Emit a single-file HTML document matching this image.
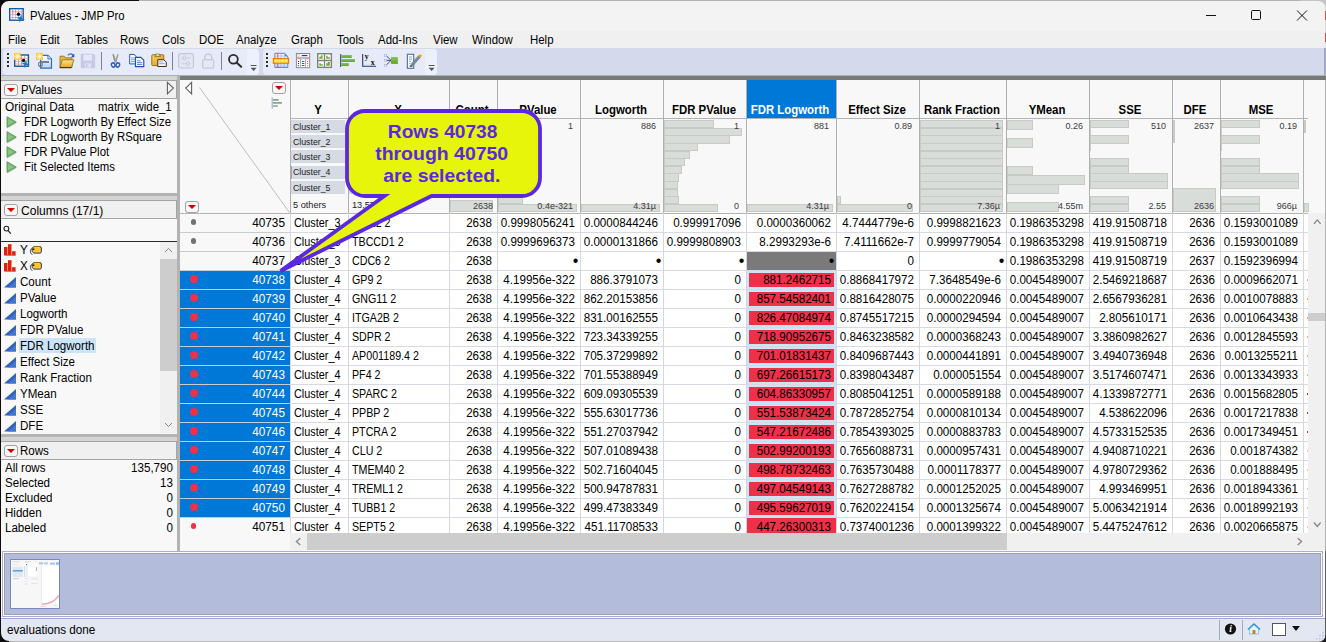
<!DOCTYPE html><html><head><meta charset="utf-8"><title>PValues - JMP Pro</title><style>
*{box-sizing:border-box;margin:0;padding:0}
html,body{width:1326px;height:642px;overflow:hidden;background:#f3f3f3}
body{font-family:"Liberation Sans",sans-serif;font-size:11.6px;color:#000;position:relative}
.a{position:absolute}
.t{position:absolute;white-space:nowrap;line-height:14px}
#title{left:0;top:0;width:1326px;height:31px;background:#f3f3f3}
#menu{left:0;top:31px;width:1326px;height:17px;background:#f0f0f0}
#tb{left:0;top:48px;width:1326px;height:27px;background:#d4d9ec}
.grp{position:absolute;top:49px;height:25.5px;background:#e7ebf7;border-radius:4px}
#bar{left:180px;top:76px;width:1146px;height:3.5px;background:#797979;z-index:3}
#tbline{left:0;top:75px;width:1326px;height:1px;background:#a3acde}
#lgray{left:0;top:76px;width:180px;height:475px;background:#d4d4d4}
.ds{position:absolute;left:0;width:177px;height:3px;background:#b4b4b4}
.ph{position:absolute;left:1px;width:176px;height:19px;background:#f0f0f0;border:1px solid #a4a4a4;border-left:none}
.pb{position:absolute;left:1px;width:176px;background:#f8f8f8}
.rd{position:absolute;width:14px;height:12px;border:1px solid #a0a0a0;border-radius:3px;background:#f8f8f8}
.rd:after{content:"";position:absolute;left:2px;top:3.2px;border-left:4px solid transparent;border-right:4px solid transparent;border-top:4.2px solid #cc0000}
.gt{position:absolute;width:0;height:0;border-top:5px solid transparent;border-bottom:5px solid transparent;border-left:9px solid #4c9a3c}
#tbl{left:180px;top:79px;width:1146px;height:472px;background:#f8f8f8;overflow:hidden}
.vl{position:absolute;width:1px;background:#b0b0b0}
.hl{position:absolute;height:1px;background:#d9d9e6}
.c{position:absolute;height:19px;line-height:19px;white-space:nowrap;font-size:11.6px;padding-top:1px}
.r{text-align:right}
.hn{position:absolute;top:22.5px;height:15px;line-height:15px;font-weight:bold;font-size:12px;text-align:center;white-space:nowrap}
.hb{position:absolute;background:#d9ddd9;border:1px solid #c6cbc6}
.hx{position:absolute;font-size:9.6px;line-height:10px;color:#3a3a3a;text-align:right;white-space:nowrap}
.cb{position:absolute;left:111px;width:54px;height:13px;background:#d5dae3}
.ci{position:absolute;left:113px;font-size:9.6px;letter-spacing:-0.35px;line-height:13px;color:#222;white-space:nowrap}
.col{position:absolute;left:20px;white-space:nowrap;line-height:16px;height:16px}
.ti{position:absolute;left:6px;width:0;height:0;border-left:10px solid transparent;border-bottom:10px solid #2f62b5}
</style></head><body>
<div class="a" id="title">
<svg class="a" style="left:8px;top:7px" width="18" height="18" viewBox="8 7 18 18"><rect x="9.700" y="8.700" width="13.500" height="11.500" fill="#fff" stroke="#1458a8" stroke-width="1.400"/><path d="M12.700 9.400v10.200M15.600 9.400v10.200M18.500 9.400v10.200M21.300 9.400v10.200" stroke="#7a9ad8" stroke-width="0.600"/><path d="M10.400 11.800h12.200M10.400 14.700h12.200M10.400 17.600h12.200" stroke="#f08080" stroke-width="0.700"/><path d="M12.700 9.400v5M15.600 9.400v3" stroke="#f08080" stroke-width="0.700"/><circle cx="18.500" cy="14.300" r="1.700" fill="#0c0c0c"/><path d="M20.600 14.300l1 3.200 3.400 1-3.400 1-1 3.200-1-3.200-3.400-1 3.400-1z" fill="#1878d0" transform="rotate(14 20.600 18.500)"/></svg>
<div class="t" style="top:8.53px;font-size:12.6px;left:30.40px;transform:scaleX(0.898);transform-origin:0 0;">PValues - JMP Pro</div>
<svg class="a" style="left:1190px;top:0" width="136" height="31" viewBox="0 0 136 31"><path d="M16 15.5h10" stroke="#111" stroke-width="1"/><rect x="61.5" y="10.5" width="9" height="9" rx="1.2" fill="none" stroke="#111" stroke-width="1"/><path d="M107 10.5l10 10M117 10.5l-10 10" stroke="#111" stroke-width="1"/></svg>
</div>
<div class="a" id="menu">
<div class="t" style="top:2.14px;font-size:12.3px;left:8.20px;transform:scaleX(0.93);transform-origin:0 0;">File</div>
<div class="t" style="top:2.14px;font-size:12.3px;left:40.20px;transform:scaleX(0.93);transform-origin:0 0;">Edit</div>
<div class="t" style="top:2.14px;font-size:12.3px;left:75.20px;transform:scaleX(0.93);transform-origin:0 0;">Tables</div>
<div class="t" style="top:2.14px;font-size:12.3px;left:120.20px;transform:scaleX(0.93);transform-origin:0 0;">Rows</div>
<div class="t" style="top:2.14px;font-size:12.3px;left:162.20px;transform:scaleX(0.93);transform-origin:0 0;">Cols</div>
<div class="t" style="top:2.14px;font-size:12.3px;left:199.20px;transform:scaleX(0.93);transform-origin:0 0;">DOE</div>
<div class="t" style="top:2.14px;font-size:12.3px;left:236.20px;transform:scaleX(0.93);transform-origin:0 0;">Analyze</div>
<div class="t" style="top:2.14px;font-size:12.3px;left:291.20px;transform:scaleX(0.93);transform-origin:0 0;">Graph</div>
<div class="t" style="top:2.14px;font-size:12.3px;left:337.20px;transform:scaleX(0.93);transform-origin:0 0;">Tools</div>
<div class="t" style="top:2.14px;font-size:12.3px;left:378.20px;transform:scaleX(0.93);transform-origin:0 0;">Add-Ins</div>
<div class="t" style="top:2.14px;font-size:12.3px;left:433.20px;transform:scaleX(0.93);transform-origin:0 0;">View</div>
<div class="t" style="top:2.14px;font-size:12.3px;left:472.20px;transform:scaleX(0.93);transform-origin:0 0;">Window</div>
<div class="t" style="top:2.14px;font-size:12.3px;left:530.20px;transform:scaleX(0.93);transform-origin:0 0;">Help</div>
</div>
<div class="a" id="tb"></div>
<div class="grp" style="left:3px;width:256px"></div><div class="grp" style="left:247px;width:12px;background:#edf1fb;border-radius:0 4px 4px 0"></div>
<div class="grp" style="left:263px;width:173.5px"></div><div class="grp" style="left:425px;width:11.5px;background:#edf1fb;border-radius:0 4px 4px 0"></div>
<svg class="a" style="left:0;top:48px" width="450" height="28" viewBox="0 48 450 28">
<defs><radialGradient id="spk"><stop offset="0" stop-color="#fffbe0"/><stop offset="0.45" stop-color="#fbe070"/><stop offset="1" stop-color="#f3c92c"/></radialGradient><linearGradient id="fold" x1="0" y1="0" x2="0" y2="1"><stop offset="0" stop-color="#fbe38a"/><stop offset="1" stop-color="#e9a61c"/></linearGradient><linearGradient id="pg" x1="0" y1="0" x2="0" y2="1"><stop offset="0" stop-color="#ffffff"/><stop offset="1" stop-color="#b9d4f0"/></linearGradient><linearGradient id="clip" x1="0" y1="0" x2="1" y2="1"><stop offset="0" stop-color="#fbd868"/><stop offset="1" stop-color="#dc9410"/></linearGradient><linearGradient id="grn" x1="0" y1="0" x2="0" y2="1"><stop offset="0" stop-color="#8cc458"/><stop offset="1" stop-color="#62a02c"/></linearGradient></defs>
<rect x="7" y="53" width="2" height="2" fill="#2c2c2c"/>
<rect x="7" y="57" width="2" height="2" fill="#2c2c2c"/>
<rect x="7" y="61" width="2" height="2" fill="#2c2c2c"/>
<rect x="7" y="65" width="2" height="2" fill="#2c2c2c"/>
<rect x="266" y="53" width="2" height="2" fill="#2c2c2c"/>
<rect x="266" y="57" width="2" height="2" fill="#2c2c2c"/>
<rect x="266" y="61" width="2" height="2" fill="#2c2c2c"/>
<rect x="266" y="65" width="2" height="2" fill="#2c2c2c"/>
<rect x="14.7" y="55" width="13.7" height="11.200" fill="#fff" stroke="#14559f" stroke-width="1.400"/><path d="M18.500 55.500v10.500M21.500 55.500v10.500M24.700 55.500v10.500" stroke="#6f8fd0" stroke-width="0.700"/><path d="M15 58.300h13M15 61.300h13M15 64h13" stroke="#ee8a8a" stroke-width="0.700"/><rect x="14" y="52.900" width="6.800" height="7" fill="url(#spk)"/><path d="M17.400 53v6.800M14.100 56.400h6.600M14.800 53.700l5.200 5.400M20 53.700l-5.200 5.400" stroke="#fffdf0" stroke-width="0.600" opacity="0.850"/><circle cx="23.500" cy="60.400" r="1.700" fill="#0c0c0c"/><path d="M25.500 59.900l1 3 3.400 1-3.400 1-1 3.100-1-3.100-3.400-1 3.400-1z" fill="#1878d0" transform="rotate(14 25.500 63.900)"/>
<path d="M40.600 55.400h7.300l3.600 3.500v9.200h-10.900z" fill="url(#pg)" stroke="#2a70c0" stroke-width="1.200"/><path d="M47.900 55.400v3.500h3.600" fill="#dcebfa" stroke="#2a70c0" stroke-width="0.900"/><rect x="36" y="52.900" width="6.900" height="7" fill="url(#spk)"/><path d="M39.450 53v6.800M36.100 56.400h6.700M36.800 53.700l5.300 5.400M42.100 53.700l-5.300 5.400" stroke="#fffdf0" stroke-width="0.600" opacity="0.850"/><path d="M41 62h8" stroke="#6b6b6b" stroke-width="1.700"/><ellipse cx="40.400" cy="64.300" rx="1.900" ry="2.300" fill="none" stroke="#7c7c7c" stroke-width="1.100"/>
<path d="M60 56.200h4.200l1.200 1.600h6.600v9.700h-12z" fill="#e9b842" stroke="#8a6a20" stroke-width="0.800"/><path d="M62.300 59.800h11.600l-2.500 7.800h-11.500z" fill="url(#fold)" stroke="#8a6418" stroke-width="0.800"/><path d="M59.900 67.700h11.500" stroke="#3c2c08" stroke-width="1"/><path d="M67.800 55.300c1.600-2 4.300-1.800 5.500 0.300" fill="none" stroke="#2c6cc4" stroke-width="1.200"/><path d="M74.300 53.600v3.600h-3.300z" fill="#1d57b0"/>
<path d="M81.200 54.200h12.300l1.200 1.200v12.300h-13.500z" fill="#c6cae8" stroke="#bcc0e2" stroke-width="0.600"/><rect x="83.500" y="54.600" width="8.600" height="6" fill="#e6e8f5"/><rect x="84.800" y="63.300" width="6.400" height="4.200" fill="#dfe2f2"/><rect x="85.600" y="64.200" width="2" height="2.600" fill="#c6cae8"/>
<rect x="101" y="52" width="1" height="18" fill="#7d819d"/>
<rect x="172" y="52" width="1" height="18" fill="#7d819d"/>
<rect x="221" y="52" width="1" height="18" fill="#7d819d"/>
<path d="M112.300 54.200l1.500 0 2.600 7.600-1.600 1.200z" fill="#8a8a8a"/><path d="M118.700 54.200l-1.500 0-2.600 7.600 1.600 1.200z" fill="#a0a0a0"/><ellipse cx="113.200" cy="65" rx="1.700" ry="2.100" fill="#fff" stroke="#2a5ccc" stroke-width="1.500" transform="rotate(-20 113.200 65)"/><ellipse cx="117.800" cy="65" rx="1.700" ry="2.100" fill="#fff" stroke="#2a5ccc" stroke-width="1.500" transform="rotate(20 117.800 65)"/>
<path d="M129.700 54.400h4.300l2.400 2.300v7.200h-6.700z" fill="#fff" stroke="#2455b4" stroke-width="1"/><path d="M131 58h4M131 59.800h4M131 61.600h4" stroke="#5a8ad8" stroke-width="0.800"/><path d="M135.500 57.400h5.300l3 2.900v6.300h-8.300z" fill="#fff" stroke="#1f4cae" stroke-width="1.100"/><path d="M137 60.800h3.500M137 62.600h5.300M137 64.400h5.300" stroke="#3f74d2" stroke-width="0.900"/>
<rect x="151.800" y="54.800" width="12" height="10.800" rx="0.800" fill="url(#clip)" stroke="#8a6414" stroke-width="0.900"/><path d="M154.800 56.600l1-2.600h3.700l1 2.600z" fill="#d8c080" stroke="#7a6420" stroke-width="0.700"/><circle cx="157.700" cy="55" r="0.700" fill="#fff8d0"/><path d="M157.800 59.700h5.800l2.700 2.400v4.400h-8.500z" fill="#eef4fc" stroke="#4a3010" stroke-width="1"/><path d="M159.200 61.800h3.600M159.200 63.600h5.600" stroke="#8a9ab8" stroke-width="0.800"/>
<rect x="178.600" y="53.700" width="14.800" height="14.300" rx="1.800" fill="#e3e7f4" stroke="#c3c7db" stroke-width="1.200"/><path d="M181.500 58h9M181.500 63.700h9" stroke="#c9cddf" stroke-width="1"/><ellipse cx="184.300" cy="58" rx="1.300" ry="2.200" fill="#e3e7f4" stroke="#c3c7db" stroke-width="0.900"/><ellipse cx="187.800" cy="63.700" rx="1.300" ry="2.200" fill="#e3e7f4" stroke="#c3c7db" stroke-width="0.900"/>
<path d="M204.700 60V57.600a3.500 3.700 0 0 1 7 0V60" fill="none" stroke="#c6cadb" stroke-width="1.500"/><rect x="202.700" y="59.600" width="11" height="8.500" rx="1" fill="#e5e9f5" stroke="#c6cadb" stroke-width="1.300"/>
<circle cx="233.400" cy="59.300" r="4.400" fill="none" stroke="#2a2a2a" stroke-width="1.800"/><path d="M236.500 62.600l4.700 4.200" stroke="#2a2a2a" stroke-width="2" stroke-linecap="round"/>
<path d="M250.7 65.500h5.800" stroke="#555" stroke-width="1"/><path d="M250.6 67.800h6l-3 3.200z" fill="#555"/>
<path d="M428.7 65.500h5.800" stroke="#555" stroke-width="1"/><path d="M428.6 67.800h6l-3 3.200z" fill="#555"/>
<path d="M274.900 53.300h9.600l3.300 3.200v11h-12.900z" fill="#f4f8ff" stroke="#6a6aaa" stroke-width="0.900"/><path d="M284.500 53.300v3.200h3.300z" fill="#3a8ae0"/><path d="M275.400 56h9M275.400 65h12M275.400 66.700h12M281 53.800v13.500M284.200 56.500v11" stroke="#8ab0e8" stroke-width="0.700"/><path d="M277.800 53.500v14" stroke="#f03838" stroke-width="0.900"/><rect x="273.500" y="58.600" width="15" height="4.600" fill="#f6f060" stroke="#f07800" stroke-width="1.300"/><path d="M277.800 59.300v3.300M281 59.300v3.300M284.200 59.300v3.300" stroke="#e8c848" stroke-width="0.700"/>
<rect x="296.400" y="53.500" width="13.300" height="14.200" fill="#fff" stroke="#8c8c8c" stroke-width="1"/><path d="M300.500 57.500v10M305.500 57.500v10M296.500 57.300h13" stroke="#9a9a9a" stroke-width="0.800"/><rect x="297.300" y="54.400" width="2.400" height="2.200" fill="#f4f4f8" stroke="#c8c8d0" stroke-width="0.500"/><path d="M301.800 55.500h5.600" stroke="#2a3c78" stroke-width="1.200"/><path d="M297 58.700h3M306 58.700h3.200" stroke="#f09098" stroke-width="1.300"/><path d="M301 58.700h4" stroke="#b8bce0" stroke-width="1.300"/><path d="M298.500 61v6" stroke="#24346c" stroke-width="1.100" stroke-dasharray="1 1.100"/><path d="M301.800 61.500h2.600M301.800 63.500h2.600M301.800 65.500h2.600" stroke="#2a4878" stroke-width="0.900"/><path d="M307.600 61v6" stroke="#f04858" stroke-width="1.100" stroke-dasharray="1 1.100"/>
<rect x="317.700" y="53.700" width="13.700" height="13.700" fill="#fff" stroke="#808080" stroke-width="1.400"/><path d="M324.500 53.700v13.700M317.700 60.500h13.700" stroke="#808080" stroke-width="1.300"/><path d="M319.300 58.800v-2h1.500v-1.500h1.800v3.500zM326.200 58.800v-3h1.500v1.500h2.200v1.500zM319.300 65.800v-2.500h1.500v1h2v1.500zM326.200 65.800v-2.500h1.500v-1.200h2.200v3.700z" fill="#6fae38"/>
<rect x="340.200" y="54" width="1" height="13" fill="#1f3a78"/><rect x="341.300" y="55" width="10.500" height="2.900" fill="url(#grn)"/><rect x="341.300" y="59" width="13.600" height="3" fill="url(#grn)"/><rect x="341.300" y="63" width="7.500" height="3" fill="url(#grn)"/>
<path d="M362.700 54v12.200h13.400" fill="none" stroke="#1f3a78" stroke-width="1.100"/><text x="364.800" y="58.700" font-family="Liberation Serif, serif" font-weight="bold" font-size="7.800" fill="#000">y</text><text x="370.800" y="64.900" font-family="Liberation Serif, serif" font-weight="bold" font-size="7.800" fill="#000">x</text>
<path d="M386 55.500l4.800 4.600M386 60.400h5M386 65.300l4.800-4.600" stroke="#22407c" stroke-width="0.900" fill="none"/><rect x="384.300" y="54.500" width="2.200" height="2" fill="#eef0fa" stroke="#a8b0d4" stroke-width="0.600"/><rect x="384.300" y="59.300" width="2.200" height="2" fill="#eef0fa" stroke="#a8b0d4" stroke-width="0.600"/><rect x="384.300" y="64.300" width="2.200" height="2" fill="#eef0fa" stroke="#a8b0d4" stroke-width="0.600"/><rect x="391" y="57" width="6.900" height="6.900" fill="url(#grn)"/>
<rect x="407.400" y="54.300" width="6.300" height="14" fill="#fbfcff" stroke="#5878a4" stroke-width="1.200"/><path d="M409 57h3M409 59.200h3M409 61.400h2M409 63.600h1.500M409 66h3.500" stroke="#7a94b8" stroke-width="0.800"/><path d="M418.700 55.400l1.900 1.700-7.300 8.300-2.900 1.400 1-3.100z" fill="#7c8c9c" stroke="#56677a" stroke-width="0.500"/><path d="M418.200 56l1.200-1.200a1.300 1.300 0 0 1 1.900 1.800l-1.100 1.200z" fill="#f5a21e"/><path d="M410.400 66.800l0.500-1.700 1.300 1.100z" fill="#2a2a2a"/>
</svg>
<div class="a" id="tbline"></div>
<div class="a" id="bar"></div>
<div class="a" id="lgray"></div>
<div class="a" style="left:177px;top:76px;width:3px;height:475px;background:#b2b2b2"></div>
<div class="ds" style="top:193px"></div><div class="ds" style="top:434px"></div>
<div class="ph" style="top:80px"></div>
<div class="rd" style="left:4px;top:84px"></div>
<div class="t" style="top:82.74px;font-size:12.3px;left:20.60px;transform:scaleX(0.918);transform-origin:0 0;">PValues</div>
<svg class="a" style="left:166px;top:81px" width="10" height="14" viewBox="0 0 10 14"><path d="M1.400 1.300l5.900 5.800-5.900 5.800z" fill="#f6f6f6" stroke="#606060" stroke-width="1.100"/></svg>
<div class="pb" style="top:99px;height:94px"></div>
<div class="t" style="top:100.14px;font-size:12.3px;left:5.30px;transform:scaleX(0.964);transform-origin:0 0;">Original Data</div>
<div class="t" style="top:100.14px;font-size:12.3px;left:98.30px;transform:scaleX(0.93);transform-origin:0 0;">matrix_wide_1</div>
<svg class="a" style="left:6px;top:116.2px" width="12" height="13" viewBox="0 0 12 13"><path d="M1.200 11.900l9.200-5.200" stroke="#b8b8b8" stroke-width="0.900"/><path d="M1 0.700l9.200 5.300-9.200 5.300z" fill="#78b872" stroke="#4f9050" stroke-width="0.800" stroke-linejoin="round"/><path d="M2.200 3l5 3-5 3z" fill="#8cc686"/></svg>
<div class="t" style="top:115.44px;font-size:12.3px;left:24.30px;transform:scaleX(0.925);transform-origin:0 0;">FDR Logworth By Effect Size</div>
<svg class="a" style="left:6px;top:131.2px" width="12" height="13" viewBox="0 0 12 13"><path d="M1.200 11.900l9.200-5.200" stroke="#b8b8b8" stroke-width="0.900"/><path d="M1 0.700l9.200 5.300-9.200 5.300z" fill="#78b872" stroke="#4f9050" stroke-width="0.800" stroke-linejoin="round"/><path d="M2.200 3l5 3-5 3z" fill="#8cc686"/></svg>
<div class="t" style="top:130.44px;font-size:12.3px;left:24.30px;transform:scaleX(0.925);transform-origin:0 0;">FDR Logworth By RSquare</div>
<svg class="a" style="left:6px;top:146.2px" width="12" height="13" viewBox="0 0 12 13"><path d="M1.200 11.900l9.200-5.200" stroke="#b8b8b8" stroke-width="0.900"/><path d="M1 0.700l9.200 5.300-9.200 5.300z" fill="#78b872" stroke="#4f9050" stroke-width="0.800" stroke-linejoin="round"/><path d="M2.200 3l5 3-5 3z" fill="#8cc686"/></svg>
<div class="t" style="top:145.44px;font-size:12.3px;left:24.30px;transform:scaleX(0.925);transform-origin:0 0;">FDR PValue Plot</div>
<svg class="a" style="left:6px;top:161.2px" width="12" height="13" viewBox="0 0 12 13"><path d="M1.200 11.900l9.200-5.200" stroke="#b8b8b8" stroke-width="0.900"/><path d="M1 0.700l9.200 5.300-9.200 5.300z" fill="#78b872" stroke="#4f9050" stroke-width="0.800" stroke-linejoin="round"/><path d="M2.200 3l5 3-5 3z" fill="#8cc686"/></svg>
<div class="t" style="top:160.44px;font-size:12.3px;left:24.30px;transform:scaleX(0.925);transform-origin:0 0;">Fit Selected Items</div>
<div class="ph" style="top:200px"></div>
<div class="rd" style="left:4px;top:204px"></div>
<div class="t" style="top:203.54px;font-size:12.3px;left:20.50px;transform:scaleX(0.98);transform-origin:0 0;">Columns (17/1)</div>
<div class="pb" style="top:219px;height:215px"></div>
<div class="a" style="left:1px;top:241px;width:176px;height:1px;background:#2a2a2a"></div>
<svg class="a" style="left:3px;top:225px" width="9" height="10" viewBox="0 0 9 10"><circle cx="3.4" cy="3.6" r="2.4" fill="none" stroke="#222" stroke-width="1.1"/><path d="M5.2 5.6l2.6 3" stroke="#222" stroke-width="1.3"/></svg>
<div class="a" style="left:160px;top:242px;width:17px;height:191px;background:#f0f0f0"></div>
<div class="a" style="left:160px;top:259px;width:17px;height:112px;background:#cdcdcd"></div>
<svg class="a" style="left:160px;top:242px" width="17" height="191" viewBox="0 0 17 191"><path d="M5 10l3.5-3.5L12 10" fill="none" stroke="#888" stroke-width="1"/><path d="M5 181l3.5 3.5L12 181" fill="none" stroke="#888" stroke-width="1"/></svg>
<svg class="a" style="left:3.900px;top:243.5px" width="12" height="12" viewBox="0 0 12 12"><path d="M0.300 11.300h11.500" stroke="#8a2416" stroke-width="0.700"/><rect x="0" y="3" width="3.500" height="8" fill="#dc2408"/><rect x="4" y="0.200" width="3.500" height="10.800" fill="#dc2408"/><rect x="8.100" y="7.200" width="3.500" height="3.800" fill="#dc2408"/></svg>
<div class="t" style="top:242.74px;font-size:12.3px;left:20.30px;transform:scaleX(0.95);transform-origin:0 0;">Y</div>
<svg class="a" style="left:29px;top:244.5px" width="14" height="12" viewBox="0 0 14 12"><path d="M4.300 3.200C1.200 3.500 0 7 3.300 9.800" fill="none" stroke="#1c1c58" stroke-width="0.900"/><path d="M4.800 1.500h6a1.500 1.500 0 0 1 1.500 1.500v3.600a1.500 1.500 0 0 1-1.500 1.500h-6l-1.600-1.700v-3.200z" fill="#fbc82c" stroke="#1c1c58" stroke-width="0.900"/><path d="M3.400 3.100l1.400-1.600h6a1.500 1.500 0 0 1 1.300 0.700" fill="none" stroke="#a86c20" stroke-width="0.900"/><circle cx="4.600" cy="4.200" r="0.900" fill="#1c1c40"/></svg>
<svg class="a" style="left:3.900px;top:259.5px" width="12" height="12" viewBox="0 0 12 12"><path d="M0.300 11.300h11.500" stroke="#8a2416" stroke-width="0.700"/><rect x="0" y="3" width="3.500" height="8" fill="#dc2408"/><rect x="4" y="0.200" width="3.500" height="10.800" fill="#dc2408"/><rect x="8.100" y="7.200" width="3.500" height="3.800" fill="#dc2408"/></svg>
<div class="t" style="top:258.74px;font-size:12.3px;left:20.30px;transform:scaleX(0.95);transform-origin:0 0;">X</div>
<svg class="a" style="left:29px;top:260.5px" width="14" height="12" viewBox="0 0 14 12"><path d="M4.300 3.200C1.200 3.500 0 7 3.300 9.800" fill="none" stroke="#1c1c58" stroke-width="0.900"/><path d="M4.800 1.500h6a1.500 1.500 0 0 1 1.500 1.500v3.600a1.500 1.500 0 0 1-1.500 1.500h-6l-1.600-1.700v-3.200z" fill="#fbc82c" stroke="#1c1c58" stroke-width="0.900"/><path d="M3.400 3.100l1.400-1.600h6a1.500 1.500 0 0 1 1.300 0.700" fill="none" stroke="#a86c20" stroke-width="0.900"/><circle cx="4.600" cy="4.200" r="0.900" fill="#1c1c40"/></svg>
<svg class="a" style="left:4px;top:277.0px" width="12" height="11" viewBox="0 0 12 11"><path d="M0 10.500L12 0V10.500Z" fill="#2f62b8"/><path d="M4 10.500L12 3.500V10.500Z" fill="#4478c8"/></svg>
<div class="t" style="top:274.74px;font-size:12.3px;left:20.30px;transform:scaleX(0.94);transform-origin:0 0;">Count</div>
<svg class="a" style="left:4px;top:293.0px" width="12" height="11" viewBox="0 0 12 11"><path d="M0 10.500L12 0V10.500Z" fill="#2f62b8"/><path d="M4 10.500L12 3.500V10.500Z" fill="#4478c8"/></svg>
<div class="t" style="top:290.74px;font-size:12.3px;left:20.30px;transform:scaleX(0.94);transform-origin:0 0;">PValue</div>
<svg class="a" style="left:4px;top:309.0px" width="12" height="11" viewBox="0 0 12 11"><path d="M0 10.500L12 0V10.500Z" fill="#2f62b8"/><path d="M4 10.500L12 3.500V10.500Z" fill="#4478c8"/></svg>
<div class="t" style="top:306.74px;font-size:12.3px;left:20.30px;transform:scaleX(0.94);transform-origin:0 0;">Logworth</div>
<svg class="a" style="left:4px;top:325.0px" width="12" height="11" viewBox="0 0 12 11"><path d="M0 10.500L12 0V10.500Z" fill="#2f62b8"/><path d="M4 10.500L12 3.500V10.500Z" fill="#4478c8"/></svg>
<div class="t" style="top:322.74px;font-size:12.3px;left:20.30px;transform:scaleX(0.94);transform-origin:0 0;">FDR PValue</div>
<svg class="a" style="left:4px;top:341.0px" width="12" height="11" viewBox="0 0 12 11"><path d="M0 10.500L12 0V10.500Z" fill="#2f62b8"/><path d="M4 10.500L12 3.500V10.500Z" fill="#4478c8"/></svg>
<div class="a" style="left:19px;top:338.2px;width:77px;height:15px;background:#cbe4fa"></div>
<div class="t" style="top:338.74px;font-size:12.3px;left:20.30px;transform:scaleX(0.94);transform-origin:0 0;">FDR Logworth</div>
<svg class="a" style="left:4px;top:357.0px" width="12" height="11" viewBox="0 0 12 11"><path d="M0 10.500L12 0V10.500Z" fill="#2f62b8"/><path d="M4 10.500L12 3.500V10.500Z" fill="#4478c8"/></svg>
<div class="t" style="top:354.74px;font-size:12.3px;left:20.30px;transform:scaleX(0.94);transform-origin:0 0;">Effect Size</div>
<svg class="a" style="left:4px;top:373.0px" width="12" height="11" viewBox="0 0 12 11"><path d="M0 10.500L12 0V10.500Z" fill="#2f62b8"/><path d="M4 10.500L12 3.500V10.500Z" fill="#4478c8"/></svg>
<div class="t" style="top:370.74px;font-size:12.3px;left:20.30px;transform:scaleX(0.94);transform-origin:0 0;">Rank Fraction</div>
<svg class="a" style="left:4px;top:389.0px" width="12" height="11" viewBox="0 0 12 11"><path d="M0 10.500L12 0V10.500Z" fill="#2f62b8"/><path d="M4 10.500L12 3.500V10.500Z" fill="#4478c8"/></svg>
<div class="t" style="top:386.74px;font-size:12.3px;left:20.30px;transform:scaleX(0.94);transform-origin:0 0;">YMean</div>
<svg class="a" style="left:4px;top:405.0px" width="12" height="11" viewBox="0 0 12 11"><path d="M0 10.500L12 0V10.500Z" fill="#2f62b8"/><path d="M4 10.500L12 3.500V10.500Z" fill="#4478c8"/></svg>
<div class="t" style="top:402.74px;font-size:12.3px;left:20.30px;transform:scaleX(0.94);transform-origin:0 0;">SSE</div>
<svg class="a" style="left:4px;top:421.0px" width="12" height="11" viewBox="0 0 12 11"><path d="M0 10.500L12 0V10.500Z" fill="#2f62b8"/><path d="M4 10.500L12 3.500V10.500Z" fill="#4478c8"/></svg>
<div class="t" style="top:418.74px;font-size:12.3px;left:20.30px;transform:scaleX(0.94);transform-origin:0 0;">DFE</div>
<div class="ph" style="top:441px"></div>
<div class="rd" style="left:4px;top:445px"></div>
<div class="t" style="top:444.04px;font-size:12.3px;left:20.40px;transform:scaleX(0.94);transform-origin:0 0;">Rows</div>
<div class="pb" style="top:460px;height:91px"></div>
<div class="t" style="top:460.74px;font-size:12.3px;left:5.30px;transform:scaleX(0.94);transform-origin:0 0;">All rows</div>
<div class="t" style="top:460.74px;font-size:12.3px;left:-127.00px;width:300px;text-align:right;transform:scaleX(0.945);transform-origin:100% 0;">135,790</div>
<div class="t" style="top:475.69px;font-size:12.3px;left:5.30px;transform:scaleX(0.94);transform-origin:0 0;">Selected</div>
<div class="t" style="top:475.69px;font-size:12.3px;left:-127.00px;width:300px;text-align:right;transform:scaleX(0.945);transform-origin:100% 0;">13</div>
<div class="t" style="top:490.64px;font-size:12.3px;left:5.30px;transform:scaleX(0.94);transform-origin:0 0;">Excluded</div>
<div class="t" style="top:490.64px;font-size:12.3px;left:-127.00px;width:300px;text-align:right;transform:scaleX(0.945);transform-origin:100% 0;">0</div>
<div class="t" style="top:505.59px;font-size:12.3px;left:5.30px;transform:scaleX(0.94);transform-origin:0 0;">Hidden</div>
<div class="t" style="top:505.59px;font-size:12.3px;left:-127.00px;width:300px;text-align:right;transform:scaleX(0.945);transform-origin:100% 0;">0</div>
<div class="t" style="top:520.54px;font-size:12.3px;left:5.30px;transform:scaleX(0.94);transform-origin:0 0;">Labeled</div>
<div class="t" style="top:520.54px;font-size:12.3px;left:-127.00px;width:300px;text-align:right;transform:scaleX(0.945);transform-origin:100% 0;">0</div>
<div class="a" id="tbl">
<div class="a" style="left:110px;top:134px;width:1018px;height:320px;background:#fff"></div>
<div class="a" style="left:567px;top:0;width:89px;height:39px;background:#0078d7"></div>
<div class="a" style="left:567px;top:191px;width:89px;height:247px;background:#cce4f7"></div>
<div class="t" style="top:23.70px;font-size:12.4px;left:68.40px;width:140px;text-align:center;transform:scaleX(0.92);transform-origin:50% 0;color:#000;font-weight:bold;">Y</div>
<div class="t" style="top:23.70px;font-size:12.4px;left:147.90px;width:140px;text-align:center;transform:scaleX(0.92);transform-origin:50% 0;color:#000;font-weight:bold;">X</div>
<div class="t" style="top:23.70px;font-size:12.4px;left:222.40px;width:140px;text-align:center;transform:scaleX(0.92);transform-origin:50% 0;color:#000;font-weight:bold;">Count</div>
<div class="t" style="top:23.70px;font-size:12.4px;left:287.90px;width:140px;text-align:center;transform:scaleX(0.92);transform-origin:50% 0;color:#000;font-weight:bold;">PValue</div>
<div class="t" style="top:23.70px;font-size:12.4px;left:370.90px;width:140px;text-align:center;transform:scaleX(0.92);transform-origin:50% 0;color:#000;font-weight:bold;">Logworth</div>
<div class="t" style="top:23.70px;font-size:12.4px;left:453.90px;width:140px;text-align:center;transform:scaleX(0.92);transform-origin:50% 0;color:#000;font-weight:bold;">FDR PValue</div>
<div class="t" style="top:23.70px;font-size:12.4px;left:540.40px;width:140px;text-align:center;transform:scaleX(0.92);transform-origin:50% 0;color:#fff;font-weight:bold;">FDR Logworth</div>
<div class="t" style="top:23.70px;font-size:12.4px;left:626.90px;width:140px;text-align:center;transform:scaleX(0.92);transform-origin:50% 0;color:#000;font-weight:bold;">Effect Size</div>
<div class="t" style="top:23.70px;font-size:12.4px;left:711.90px;width:140px;text-align:center;transform:scaleX(0.92);transform-origin:50% 0;color:#000;font-weight:bold;">Rank Fraction</div>
<div class="t" style="top:23.70px;font-size:12.4px;left:796.90px;width:140px;text-align:center;transform:scaleX(0.92);transform-origin:50% 0;color:#000;font-weight:bold;">YMean</div>
<div class="t" style="top:23.70px;font-size:12.4px;left:879.90px;width:140px;text-align:center;transform:scaleX(0.92);transform-origin:50% 0;color:#000;font-weight:bold;">SSE</div>
<div class="t" style="top:23.70px;font-size:12.4px;left:945.40px;width:140px;text-align:center;transform:scaleX(0.92);transform-origin:50% 0;color:#000;font-weight:bold;">DFE</div>
<div class="t" style="top:23.70px;font-size:12.4px;left:1010.90px;width:140px;text-align:center;transform:scaleX(0.92);transform-origin:50% 0;color:#000;font-weight:bold;">MSE</div>
<div class="hl" style="left:110px;top:39px;width:1018px;background:#b4b4b4"></div>
<div class="hl" style="left:0;top:134px;width:1128px;background:#b4b4b4"></div>
<svg class="a" style="left:0;top:0" width="110" height="135" viewBox="0 0 110 135"><path d="M19.5 8.5L109.5 133.5" stroke="#bdbdbd" stroke-width="1" fill="none"/><path d="M11.600 3.300l-5.900 5.800 5.900 5.800z" fill="#fdfdfd" stroke="#606060" stroke-width="1.100"/><path d="M92.200 18.200v11.500" stroke="#a0acd4" stroke-width="1.100"/><path d="M93 20.900h5.600M93 23.900h8.900M93 27h4.700" stroke="#8ea08e" stroke-width="1.700"/></svg>
<div class="rd" style="left:92px;top:3px"></div>
<div class="rd" style="left:5px;top:122px;width:13.500px;height:11.500px"></div>
<div class="cb" style="top:41.0px"></div>
<div class="t" style="top:40.77px;font-size:9.9px;left:113.30px;transform:scaleX(0.885);transform-origin:0 0;color:#222;">Cluster_1</div>
<div class="cb" style="top:56.2px"></div>
<div class="t" style="top:55.97px;font-size:9.9px;left:113.30px;transform:scaleX(0.885);transform-origin:0 0;color:#222;">Cluster_2</div>
<div class="cb" style="top:71.4px"></div>
<div class="t" style="top:71.17px;font-size:9.9px;left:113.30px;transform:scaleX(0.885);transform-origin:0 0;color:#222;">Cluster_3</div>
<div class="cb" style="top:86.6px"></div>
<div class="t" style="top:86.37px;font-size:9.9px;left:113.30px;transform:scaleX(0.885);transform-origin:0 0;color:#222;">Cluster_4</div>
<div class="cb" style="top:101.8px"></div>
<div class="t" style="top:101.57px;font-size:9.9px;left:113.30px;transform:scaleX(0.885);transform-origin:0 0;color:#222;">Cluster_5</div>
<div class="a" style="left:111px;top:87px;width:1px;height:13px;background:#98a0b4"></div>
<div class="t" style="top:118.57px;font-size:9.9px;left:113.30px;transform:scaleX(0.93);transform-origin:0 0;color:#222;">5 others</div>
<div class="cb" style="left:169px;width:30px;top:41.0px"></div>
<div class="cb" style="left:169px;width:30px;top:56.2px"></div>
<div class="cb" style="left:169px;width:30px;top:71.4px"></div>
<div class="cb" style="left:169px;width:30px;top:86.6px"></div>
<div class="cb" style="left:169px;width:30px;top:101.8px"></div>
<div class="t" style="top:118.57px;font-size:9.9px;left:172.00px;transform:scaleX(0.93);transform-origin:0 0;color:#222;">13,578 others</div>
<div class="hb" style="left:270px;top:120.5px;width:43px;height:12.5px"></div>
<div class="t" style="top:120.31px;font-size:9.5px;left:232.50px;width:80px;text-align:right;transform:scaleX(0.95);transform-origin:100% 0;color:#3a3a3a;">2638</div>
<div class="hb" style="left:318px;top:117.2px;width:25px;height:8.2px"></div>
<div class="hb" style="left:318px;top:124.8px;width:79px;height:8.2px"></div>
<div class="t" style="top:39.91px;font-size:9.5px;left:313.00px;width:80px;text-align:right;transform:scaleX(0.95);transform-origin:100% 0;color:#3a3a3a;">1</div>
<div class="t" style="top:120.31px;font-size:9.5px;left:313.00px;width:80px;text-align:right;transform:scaleX(0.95);transform-origin:100% 0;color:#3a3a3a;">0.4e-321</div>
<div class="hb" style="left:401px;top:124.8px;width:79px;height:8.2px"></div>
<div class="t" style="top:39.91px;font-size:9.5px;left:396.00px;width:80px;text-align:right;transform:scaleX(0.95);transform-origin:100% 0;color:#3a3a3a;">886</div>
<div class="t" style="top:120.31px;font-size:9.5px;left:396.00px;width:80px;text-align:right;transform:scaleX(0.95);transform-origin:100% 0;color:#3a3a3a;">4.31µ</div>
<div class="hb" style="left:484px;top:41.2px;width:50px;height:8.2px"></div>
<div class="hb" style="left:484px;top:48.8px;width:78px;height:8.2px"></div>
<div class="hb" style="left:484px;top:56.4px;width:66px;height:8.2px"></div>
<div class="hb" style="left:484px;top:64.0px;width:34px;height:8.2px"></div>
<div class="hb" style="left:484px;top:71.6px;width:26px;height:8.2px"></div>
<div class="hb" style="left:484px;top:79.2px;width:21px;height:8.2px"></div>
<div class="hb" style="left:484px;top:86.8px;width:18px;height:8.2px"></div>
<div class="hb" style="left:484px;top:94.4px;width:15px;height:8.2px"></div>
<div class="hb" style="left:484px;top:102.0px;width:14px;height:8.2px"></div>
<div class="hb" style="left:484px;top:109.6px;width:14px;height:8.2px"></div>
<div class="hb" style="left:484px;top:117.2px;width:15px;height:8.2px"></div>
<div class="hb" style="left:484px;top:124.8px;width:54px;height:8.2px"></div>
<div class="t" style="top:39.91px;font-size:9.5px;left:479.00px;width:80px;text-align:right;transform:scaleX(0.95);transform-origin:100% 0;color:#3a3a3a;">1</div>
<div class="t" style="top:120.31px;font-size:9.5px;left:479.00px;width:80px;text-align:right;transform:scaleX(0.95);transform-origin:100% 0;color:#3a3a3a;">0</div>
<div class="hb" style="left:567px;top:124.8px;width:86px;height:8.2px"></div>
<div class="t" style="top:39.91px;font-size:9.5px;left:569.00px;width:80px;text-align:right;transform:scaleX(0.95);transform-origin:100% 0;color:#3a3a3a;">881</div>
<div class="t" style="top:120.31px;font-size:9.5px;left:569.00px;width:80px;text-align:right;transform:scaleX(0.95);transform-origin:100% 0;color:#3a3a3a;">4.31µ</div>
<div class="hb" style="left:657px;top:117.2px;width:4px;height:8.2px"></div>
<div class="hb" style="left:657px;top:124.8px;width:76px;height:8.2px"></div>
<div class="t" style="top:39.91px;font-size:9.5px;left:652.00px;width:80px;text-align:right;transform:scaleX(0.95);transform-origin:100% 0;color:#3a3a3a;">0.89</div>
<div class="t" style="top:120.31px;font-size:9.5px;left:652.00px;width:80px;text-align:right;transform:scaleX(0.95);transform-origin:100% 0;color:#3a3a3a;">0</div>
<div class="hb" style="left:740px;top:41.2px;width:83px;height:8.2px"></div>
<div class="hb" style="left:740px;top:48.8px;width:83px;height:8.2px"></div>
<div class="hb" style="left:740px;top:56.4px;width:83px;height:8.2px"></div>
<div class="hb" style="left:740px;top:64.0px;width:83px;height:8.2px"></div>
<div class="hb" style="left:740px;top:71.6px;width:83px;height:8.2px"></div>
<div class="hb" style="left:740px;top:79.2px;width:83px;height:8.2px"></div>
<div class="hb" style="left:740px;top:86.8px;width:83px;height:8.2px"></div>
<div class="hb" style="left:740px;top:94.4px;width:83px;height:8.2px"></div>
<div class="hb" style="left:740px;top:102.0px;width:83px;height:8.2px"></div>
<div class="hb" style="left:740px;top:109.6px;width:83px;height:8.2px"></div>
<div class="hb" style="left:740px;top:117.2px;width:83px;height:8.2px"></div>
<div class="hb" style="left:740px;top:124.8px;width:83px;height:8.2px"></div>
<div class="t" style="top:39.91px;font-size:9.5px;left:740.00px;width:80px;text-align:right;transform:scaleX(0.95);transform-origin:100% 0;color:#3a3a3a;">1</div>
<div class="t" style="top:120.31px;font-size:9.5px;left:740.00px;width:80px;text-align:right;transform:scaleX(0.95);transform-origin:100% 0;color:#3a3a3a;">7.36µ</div>
<div class="hb" style="left:827px;top:41.2px;width:26px;height:9.7px"></div>
<div class="hb" style="left:827px;top:59.4px;width:26px;height:9.7px"></div>
<div class="hb" style="left:827px;top:86.8px;width:26px;height:9.7px"></div>
<div class="hb" style="left:827px;top:95.9px;width:78px;height:9.7px"></div>
<div class="hb" style="left:827px;top:105.0px;width:52px;height:9.7px"></div>
<div class="hb" style="left:827px;top:123.3px;width:52px;height:9.7px"></div>
<div class="t" style="top:39.91px;font-size:9.5px;left:823.00px;width:80px;text-align:right;transform:scaleX(0.95);transform-origin:100% 0;color:#3a3a3a;">0.26</div>
<div class="t" style="top:120.31px;font-size:9.5px;left:823.00px;width:80px;text-align:right;transform:scaleX(0.95);transform-origin:100% 0;color:#3a3a3a;">4.55m</div>
<div class="hb" style="left:910px;top:41.2px;width:39px;height:8.2px"></div>
<div class="a" style="left:910px;top:48.8px;width:1px;height:8.2px;background:#c9cec9"></div>
<div class="hb" style="left:910px;top:56.4px;width:39px;height:8.2px"></div>
<div class="a" style="left:910px;top:64.0px;width:1px;height:8.2px;background:#c9cec9"></div>
<div class="hb" style="left:910px;top:79.2px;width:39px;height:8.2px"></div>
<div class="hb" style="left:910px;top:86.8px;width:39px;height:8.2px"></div>
<div class="hb" style="left:910px;top:94.4px;width:78px;height:8.2px"></div>
<div class="hb" style="left:910px;top:102.0px;width:78px;height:8.2px"></div>
<div class="hb" style="left:910px;top:117.2px;width:39px;height:8.2px"></div>
<div class="hb" style="left:910px;top:124.8px;width:39px;height:8.2px"></div>
<div class="t" style="top:39.91px;font-size:9.5px;left:906.00px;width:80px;text-align:right;transform:scaleX(0.95);transform-origin:100% 0;color:#3a3a3a;">510</div>
<div class="t" style="top:120.31px;font-size:9.5px;left:906.00px;width:80px;text-align:right;transform:scaleX(0.95);transform-origin:100% 0;color:#3a3a3a;">2.55</div>
<div class="hb" style="left:993px;top:109.4px;width:43px;height:23.4px"></div>
<div class="hb" style="left:993px;top:41px;width:1px;height:23px"></div>
<div class="t" style="top:39.91px;font-size:9.5px;left:954.00px;width:80px;text-align:right;transform:scaleX(0.95);transform-origin:100% 0;color:#3a3a3a;">2637</div>
<div class="t" style="top:120.31px;font-size:9.5px;left:954.00px;width:80px;text-align:right;transform:scaleX(0.95);transform-origin:100% 0;color:#3a3a3a;">2636</div>
<div class="hb" style="left:1041px;top:41.2px;width:39px;height:8.2px"></div>
<div class="a" style="left:1041px;top:48.8px;width:1px;height:8.2px;background:#c9cec9"></div>
<div class="hb" style="left:1041px;top:56.4px;width:39px;height:8.2px"></div>
<div class="a" style="left:1041px;top:64.0px;width:1px;height:8.2px;background:#c9cec9"></div>
<div class="hb" style="left:1041px;top:79.2px;width:39px;height:8.2px"></div>
<div class="hb" style="left:1041px;top:86.8px;width:39px;height:8.2px"></div>
<div class="hb" style="left:1041px;top:94.4px;width:78px;height:8.2px"></div>
<div class="hb" style="left:1041px;top:102.0px;width:78px;height:8.2px"></div>
<div class="hb" style="left:1041px;top:117.2px;width:39px;height:8.2px"></div>
<div class="hb" style="left:1041px;top:124.8px;width:39px;height:8.2px"></div>
<div class="t" style="top:39.91px;font-size:9.5px;left:1037.00px;width:80px;text-align:right;transform:scaleX(0.95);transform-origin:100% 0;color:#3a3a3a;">0.19</div>
<div class="t" style="top:120.31px;font-size:9.5px;left:1037.00px;width:80px;text-align:right;transform:scaleX(0.95);transform-origin:100% 0;color:#3a3a3a;">966µ</div>
<div class="hb" style="left:1124px;top:123.5px;width:5px;height:9px"></div>
<div class="hb" style="left:1124px;top:41px;width:1px;height:13px"></div>
<div class="a" style="left:10.7px;top:140.1px;width:5.6px;height:5.6px;border-radius:50%;background:#727272"></div>
<div class="t" style="top:136.81px;font-size:12.1px;left:15.40px;width:90px;text-align:right;transform:scaleX(0.977);transform-origin:100% 0;">40735</div>
<div class="t" style="top:136.74px;font-size:12.3px;left:114.30px;transform:scaleX(0.885);transform-origin:0 0;">Cluster_3</div>
<div class="t" style="top:136.74px;font-size:12.3px;left:172.30px;transform:scaleX(0.868);transform-origin:0 0;">NME2 2</div>
<div class="t" style="top:136.88px;font-size:11.9px;left:191.50px;width:120px;text-align:right;transform:scaleX(0.977);transform-origin:100% 0;">2638</div>
<div class="t" style="top:136.88px;font-size:11.9px;left:274.50px;width:120px;text-align:right;transform:scaleX(0.977);transform-origin:100% 0;">0.9998056241</div>
<div class="t" style="top:136.88px;font-size:11.9px;left:357.50px;width:120px;text-align:right;transform:scaleX(0.977);transform-origin:100% 0;">0.0000844246</div>
<div class="t" style="top:136.88px;font-size:11.9px;left:440.50px;width:120px;text-align:right;transform:scaleX(0.977);transform-origin:100% 0;">0.999917096</div>
<div class="t" style="top:136.88px;font-size:11.9px;left:530.50px;width:120px;text-align:right;transform:scaleX(0.977);transform-origin:100% 0;">0.0000360062</div>
<div class="t" style="top:136.88px;font-size:11.9px;left:613.50px;width:120px;text-align:right;transform:scaleX(0.977);transform-origin:100% 0;">4.7444779e-6</div>
<div class="t" style="top:136.88px;font-size:11.9px;left:700.50px;width:120px;text-align:right;transform:scaleX(0.977);transform-origin:100% 0;">0.9998821623</div>
<div class="t" style="top:136.88px;font-size:11.9px;left:783.50px;width:120px;text-align:right;transform:scaleX(0.977);transform-origin:100% 0;">0.1986353298</div>
<div class="t" style="top:136.88px;font-size:11.9px;left:866.50px;width:120px;text-align:right;transform:scaleX(0.977);transform-origin:100% 0;">419.91508718</div>
<div class="t" style="top:136.88px;font-size:11.9px;left:914.50px;width:120px;text-align:right;transform:scaleX(0.977);transform-origin:100% 0;">2636</div>
<div class="t" style="top:136.88px;font-size:11.9px;left:997.50px;width:120px;text-align:right;transform:scaleX(0.977);transform-origin:100% 0;">0.1593001089</div>
<div class="a" style="left:10.7px;top:159.1px;width:5.6px;height:5.6px;border-radius:50%;background:#727272"></div>
<div class="t" style="top:155.81px;font-size:12.1px;left:15.40px;width:90px;text-align:right;transform:scaleX(0.977);transform-origin:100% 0;">40736</div>
<div class="t" style="top:155.74px;font-size:12.3px;left:114.30px;transform:scaleX(0.885);transform-origin:0 0;">Cluster_3</div>
<div class="t" style="top:155.74px;font-size:12.3px;left:172.30px;transform:scaleX(0.868);transform-origin:0 0;">TBCCD1 2</div>
<div class="t" style="top:155.88px;font-size:11.9px;left:191.50px;width:120px;text-align:right;transform:scaleX(0.977);transform-origin:100% 0;">2638</div>
<div class="t" style="top:155.88px;font-size:11.9px;left:274.50px;width:120px;text-align:right;transform:scaleX(0.977);transform-origin:100% 0;">0.9999696373</div>
<div class="t" style="top:155.88px;font-size:11.9px;left:357.50px;width:120px;text-align:right;transform:scaleX(0.977);transform-origin:100% 0;">0.0000131866</div>
<div class="t" style="top:155.88px;font-size:11.9px;left:440.50px;width:120px;text-align:right;transform:scaleX(0.977);transform-origin:100% 0;">0.9999808903</div>
<div class="t" style="top:155.88px;font-size:11.9px;left:530.50px;width:120px;text-align:right;transform:scaleX(0.977);transform-origin:100% 0;">8.2993293e-6</div>
<div class="t" style="top:155.88px;font-size:11.9px;left:613.50px;width:120px;text-align:right;transform:scaleX(0.977);transform-origin:100% 0;">7.4111662e-7</div>
<div class="t" style="top:155.88px;font-size:11.9px;left:700.50px;width:120px;text-align:right;transform:scaleX(0.977);transform-origin:100% 0;">0.9999779054</div>
<div class="t" style="top:155.88px;font-size:11.9px;left:783.50px;width:120px;text-align:right;transform:scaleX(0.977);transform-origin:100% 0;">0.1986353298</div>
<div class="t" style="top:155.88px;font-size:11.9px;left:866.50px;width:120px;text-align:right;transform:scaleX(0.977);transform-origin:100% 0;">419.91508719</div>
<div class="t" style="top:155.88px;font-size:11.9px;left:914.50px;width:120px;text-align:right;transform:scaleX(0.977);transform-origin:100% 0;">2636</div>
<div class="t" style="top:155.88px;font-size:11.9px;left:997.50px;width:120px;text-align:right;transform:scaleX(0.977);transform-origin:100% 0;">0.1593001089</div>
<div class="t" style="top:174.81px;font-size:12.1px;left:15.40px;width:90px;text-align:right;transform:scaleX(0.977);transform-origin:100% 0;">40737</div>
<div class="t" style="top:174.74px;font-size:12.3px;left:114.30px;transform:scaleX(0.885);transform-origin:0 0;">Cluster_3</div>
<div class="t" style="top:174.74px;font-size:12.3px;left:172.30px;transform:scaleX(0.868);transform-origin:0 0;">CDC6 2</div>
<div class="t" style="top:174.88px;font-size:11.9px;left:191.50px;width:120px;text-align:right;transform:scaleX(0.977);transform-origin:100% 0;">2638</div>
<div class="t" style="top:174.76px;font-size:16px;left:278.40px;width:120px;text-align:right;transform:scaleX(1);transform-origin:100% 0;">•</div>
<div class="t" style="top:174.76px;font-size:16px;left:361.40px;width:120px;text-align:right;transform:scaleX(1);transform-origin:100% 0;">•</div>
<div class="t" style="top:174.76px;font-size:16px;left:444.40px;width:120px;text-align:right;transform:scaleX(1);transform-origin:100% 0;">•</div>
<div class="a" style="left:567px;top:173px;width:89px;height:18px;background:#7a7a7a"></div>
<div class="t" style="top:174.76px;font-size:16px;left:534.40px;width:120px;text-align:right;transform:scaleX(1);transform-origin:100% 0;">•</div>
<div class="t" style="top:174.88px;font-size:11.9px;left:613.50px;width:120px;text-align:right;transform:scaleX(0.977);transform-origin:100% 0;">0</div>
<div class="t" style="top:174.76px;font-size:16px;left:704.40px;width:120px;text-align:right;transform:scaleX(1);transform-origin:100% 0;">•</div>
<div class="t" style="top:174.88px;font-size:11.9px;left:783.50px;width:120px;text-align:right;transform:scaleX(0.977);transform-origin:100% 0;">0.1986353298</div>
<div class="t" style="top:174.88px;font-size:11.9px;left:866.50px;width:120px;text-align:right;transform:scaleX(0.977);transform-origin:100% 0;">419.91508719</div>
<div class="t" style="top:174.88px;font-size:11.9px;left:914.50px;width:120px;text-align:right;transform:scaleX(0.977);transform-origin:100% 0;">2637</div>
<div class="t" style="top:174.88px;font-size:11.9px;left:997.50px;width:120px;text-align:right;transform:scaleX(0.977);transform-origin:100% 0;">0.1592396994</div>
<div class="a" style="left:0;top:192px;width:110px;height:18px;background:#0078d7"></div>
<div class="a" style="left:9.5px;top:195.9px;width:8px;height:8px;border-radius:50%;background:#ee3048"></div>
<div class="t" style="top:193.81px;font-size:12.1px;left:15.40px;width:90px;text-align:right;transform:scaleX(0.977);transform-origin:100% 0;color:#fff;">40738</div>
<div class="t" style="top:193.74px;font-size:12.3px;left:114.30px;transform:scaleX(0.885);transform-origin:0 0;">Cluster_4</div>
<div class="t" style="top:193.74px;font-size:12.3px;left:172.30px;transform:scaleX(0.868);transform-origin:0 0;">GP9 2</div>
<div class="t" style="top:193.88px;font-size:11.9px;left:191.50px;width:120px;text-align:right;transform:scaleX(0.977);transform-origin:100% 0;">2638</div>
<div class="t" style="top:193.88px;font-size:11.9px;left:274.50px;width:120px;text-align:right;transform:scaleX(0.977);transform-origin:100% 0;">4.19956e-322</div>
<div class="t" style="top:193.88px;font-size:11.9px;left:357.50px;width:120px;text-align:right;transform:scaleX(0.977);transform-origin:100% 0;">886.3791073</div>
<div class="t" style="top:193.88px;font-size:11.9px;left:440.50px;width:120px;text-align:right;transform:scaleX(0.977);transform-origin:100% 0;">0</div>
<div class="a" style="left:569px;top:194px;width:85px;height:14px;background:#ee3048"></div>
<div class="t" style="top:193.88px;font-size:11.9px;left:530.50px;width:120px;text-align:right;transform:scaleX(0.977);transform-origin:100% 0;">881.2462715</div>
<div class="t" style="top:193.88px;font-size:11.9px;left:613.50px;width:120px;text-align:right;transform:scaleX(0.977);transform-origin:100% 0;">0.8868417972</div>
<div class="t" style="top:193.88px;font-size:11.9px;left:700.50px;width:120px;text-align:right;transform:scaleX(0.977);transform-origin:100% 0;">7.3648549e-6</div>
<div class="t" style="top:193.88px;font-size:11.9px;left:783.50px;width:120px;text-align:right;transform:scaleX(0.977);transform-origin:100% 0;">0.0045489007</div>
<div class="t" style="top:193.88px;font-size:11.9px;left:866.50px;width:120px;text-align:right;transform:scaleX(0.977);transform-origin:100% 0;">2.5469218687</div>
<div class="t" style="top:193.88px;font-size:11.9px;left:914.50px;width:120px;text-align:right;transform:scaleX(0.977);transform-origin:100% 0;">2636</div>
<div class="t" style="top:193.88px;font-size:11.9px;left:997.50px;width:120px;text-align:right;transform:scaleX(0.977);transform-origin:100% 0;">0.0009662071</div>
<div class="a" style="left:0;top:211px;width:110px;height:18px;background:#0078d7"></div>
<div class="a" style="left:9.5px;top:214.9px;width:8px;height:8px;border-radius:50%;background:#ee3048"></div>
<div class="t" style="top:212.81px;font-size:12.1px;left:15.40px;width:90px;text-align:right;transform:scaleX(0.977);transform-origin:100% 0;color:#fff;">40739</div>
<div class="t" style="top:212.74px;font-size:12.3px;left:114.30px;transform:scaleX(0.885);transform-origin:0 0;">Cluster_4</div>
<div class="t" style="top:212.74px;font-size:12.3px;left:172.30px;transform:scaleX(0.868);transform-origin:0 0;">GNG11 2</div>
<div class="t" style="top:212.88px;font-size:11.9px;left:191.50px;width:120px;text-align:right;transform:scaleX(0.977);transform-origin:100% 0;">2638</div>
<div class="t" style="top:212.88px;font-size:11.9px;left:274.50px;width:120px;text-align:right;transform:scaleX(0.977);transform-origin:100% 0;">4.19956e-322</div>
<div class="t" style="top:212.88px;font-size:11.9px;left:357.50px;width:120px;text-align:right;transform:scaleX(0.977);transform-origin:100% 0;">862.20153856</div>
<div class="t" style="top:212.88px;font-size:11.9px;left:440.50px;width:120px;text-align:right;transform:scaleX(0.977);transform-origin:100% 0;">0</div>
<div class="a" style="left:569px;top:213px;width:85px;height:14px;background:#ee3048"></div>
<div class="t" style="top:212.88px;font-size:11.9px;left:530.50px;width:120px;text-align:right;transform:scaleX(0.977);transform-origin:100% 0;">857.54582401</div>
<div class="t" style="top:212.88px;font-size:11.9px;left:613.50px;width:120px;text-align:right;transform:scaleX(0.977);transform-origin:100% 0;">0.8816428075</div>
<div class="t" style="top:212.88px;font-size:11.9px;left:700.50px;width:120px;text-align:right;transform:scaleX(0.977);transform-origin:100% 0;">0.0000220946</div>
<div class="t" style="top:212.88px;font-size:11.9px;left:783.50px;width:120px;text-align:right;transform:scaleX(0.977);transform-origin:100% 0;">0.0045489007</div>
<div class="t" style="top:212.88px;font-size:11.9px;left:866.50px;width:120px;text-align:right;transform:scaleX(0.977);transform-origin:100% 0;">2.6567936281</div>
<div class="t" style="top:212.88px;font-size:11.9px;left:914.50px;width:120px;text-align:right;transform:scaleX(0.977);transform-origin:100% 0;">2636</div>
<div class="t" style="top:212.88px;font-size:11.9px;left:997.50px;width:120px;text-align:right;transform:scaleX(0.977);transform-origin:100% 0;">0.0010078883</div>
<div class="a" style="left:0;top:230px;width:110px;height:18px;background:#0078d7"></div>
<div class="a" style="left:9.5px;top:233.9px;width:8px;height:8px;border-radius:50%;background:#ee3048"></div>
<div class="t" style="top:231.81px;font-size:12.1px;left:15.40px;width:90px;text-align:right;transform:scaleX(0.977);transform-origin:100% 0;color:#fff;">40740</div>
<div class="t" style="top:231.74px;font-size:12.3px;left:114.30px;transform:scaleX(0.885);transform-origin:0 0;">Cluster_4</div>
<div class="t" style="top:231.74px;font-size:12.3px;left:172.30px;transform:scaleX(0.868);transform-origin:0 0;">ITGA2B 2</div>
<div class="t" style="top:231.88px;font-size:11.9px;left:191.50px;width:120px;text-align:right;transform:scaleX(0.977);transform-origin:100% 0;">2638</div>
<div class="t" style="top:231.88px;font-size:11.9px;left:274.50px;width:120px;text-align:right;transform:scaleX(0.977);transform-origin:100% 0;">4.19956e-322</div>
<div class="t" style="top:231.88px;font-size:11.9px;left:357.50px;width:120px;text-align:right;transform:scaleX(0.977);transform-origin:100% 0;">831.00162555</div>
<div class="t" style="top:231.88px;font-size:11.9px;left:440.50px;width:120px;text-align:right;transform:scaleX(0.977);transform-origin:100% 0;">0</div>
<div class="a" style="left:569px;top:232px;width:85px;height:14px;background:#ee3048"></div>
<div class="t" style="top:231.88px;font-size:11.9px;left:530.50px;width:120px;text-align:right;transform:scaleX(0.977);transform-origin:100% 0;">826.47084974</div>
<div class="t" style="top:231.88px;font-size:11.9px;left:613.50px;width:120px;text-align:right;transform:scaleX(0.977);transform-origin:100% 0;">0.8745517215</div>
<div class="t" style="top:231.88px;font-size:11.9px;left:700.50px;width:120px;text-align:right;transform:scaleX(0.977);transform-origin:100% 0;">0.0000294594</div>
<div class="t" style="top:231.88px;font-size:11.9px;left:783.50px;width:120px;text-align:right;transform:scaleX(0.977);transform-origin:100% 0;">0.0045489007</div>
<div class="t" style="top:231.88px;font-size:11.9px;left:866.50px;width:120px;text-align:right;transform:scaleX(0.977);transform-origin:100% 0;">2.805610171</div>
<div class="t" style="top:231.88px;font-size:11.9px;left:914.50px;width:120px;text-align:right;transform:scaleX(0.977);transform-origin:100% 0;">2636</div>
<div class="t" style="top:231.88px;font-size:11.9px;left:997.50px;width:120px;text-align:right;transform:scaleX(0.977);transform-origin:100% 0;">0.0010643438</div>
<div class="a" style="left:0;top:249px;width:110px;height:18px;background:#0078d7"></div>
<div class="a" style="left:9.5px;top:252.9px;width:8px;height:8px;border-radius:50%;background:#ee3048"></div>
<div class="t" style="top:250.81px;font-size:12.1px;left:15.40px;width:90px;text-align:right;transform:scaleX(0.977);transform-origin:100% 0;color:#fff;">40741</div>
<div class="t" style="top:250.74px;font-size:12.3px;left:114.30px;transform:scaleX(0.885);transform-origin:0 0;">Cluster_4</div>
<div class="t" style="top:250.74px;font-size:12.3px;left:172.30px;transform:scaleX(0.868);transform-origin:0 0;">SDPR 2</div>
<div class="t" style="top:250.88px;font-size:11.9px;left:191.50px;width:120px;text-align:right;transform:scaleX(0.977);transform-origin:100% 0;">2638</div>
<div class="t" style="top:250.88px;font-size:11.9px;left:274.50px;width:120px;text-align:right;transform:scaleX(0.977);transform-origin:100% 0;">4.19956e-322</div>
<div class="t" style="top:250.88px;font-size:11.9px;left:357.50px;width:120px;text-align:right;transform:scaleX(0.977);transform-origin:100% 0;">723.34339255</div>
<div class="t" style="top:250.88px;font-size:11.9px;left:440.50px;width:120px;text-align:right;transform:scaleX(0.977);transform-origin:100% 0;">0</div>
<div class="a" style="left:569px;top:251px;width:85px;height:14px;background:#ee3048"></div>
<div class="t" style="top:250.88px;font-size:11.9px;left:530.50px;width:120px;text-align:right;transform:scaleX(0.977);transform-origin:100% 0;">718.90952675</div>
<div class="t" style="top:250.88px;font-size:11.9px;left:613.50px;width:120px;text-align:right;transform:scaleX(0.977);transform-origin:100% 0;">0.8463238582</div>
<div class="t" style="top:250.88px;font-size:11.9px;left:700.50px;width:120px;text-align:right;transform:scaleX(0.977);transform-origin:100% 0;">0.0000368243</div>
<div class="t" style="top:250.88px;font-size:11.9px;left:783.50px;width:120px;text-align:right;transform:scaleX(0.977);transform-origin:100% 0;">0.0045489007</div>
<div class="t" style="top:250.88px;font-size:11.9px;left:866.50px;width:120px;text-align:right;transform:scaleX(0.977);transform-origin:100% 0;">3.3860982627</div>
<div class="t" style="top:250.88px;font-size:11.9px;left:914.50px;width:120px;text-align:right;transform:scaleX(0.977);transform-origin:100% 0;">2636</div>
<div class="t" style="top:250.88px;font-size:11.9px;left:997.50px;width:120px;text-align:right;transform:scaleX(0.977);transform-origin:100% 0;">0.0012845593</div>
<div class="a" style="left:0;top:268px;width:110px;height:18px;background:#0078d7"></div>
<div class="a" style="left:9.5px;top:271.9px;width:8px;height:8px;border-radius:50%;background:#ee3048"></div>
<div class="t" style="top:269.81px;font-size:12.1px;left:15.40px;width:90px;text-align:right;transform:scaleX(0.977);transform-origin:100% 0;color:#fff;">40742</div>
<div class="t" style="top:269.74px;font-size:12.3px;left:114.30px;transform:scaleX(0.885);transform-origin:0 0;">Cluster_4</div>
<div class="t" style="top:269.74px;font-size:12.3px;left:172.30px;transform:scaleX(0.868);transform-origin:0 0;">AP001189.4 2</div>
<div class="t" style="top:269.88px;font-size:11.9px;left:191.50px;width:120px;text-align:right;transform:scaleX(0.977);transform-origin:100% 0;">2638</div>
<div class="t" style="top:269.88px;font-size:11.9px;left:274.50px;width:120px;text-align:right;transform:scaleX(0.977);transform-origin:100% 0;">4.19956e-322</div>
<div class="t" style="top:269.88px;font-size:11.9px;left:357.50px;width:120px;text-align:right;transform:scaleX(0.977);transform-origin:100% 0;">705.37299892</div>
<div class="t" style="top:269.88px;font-size:11.9px;left:440.50px;width:120px;text-align:right;transform:scaleX(0.977);transform-origin:100% 0;">0</div>
<div class="a" style="left:569px;top:270px;width:85px;height:14px;background:#ee3048"></div>
<div class="t" style="top:269.88px;font-size:11.9px;left:530.50px;width:120px;text-align:right;transform:scaleX(0.977);transform-origin:100% 0;">701.01831437</div>
<div class="t" style="top:269.88px;font-size:11.9px;left:613.50px;width:120px;text-align:right;transform:scaleX(0.977);transform-origin:100% 0;">0.8409687443</div>
<div class="t" style="top:269.88px;font-size:11.9px;left:700.50px;width:120px;text-align:right;transform:scaleX(0.977);transform-origin:100% 0;">0.0000441891</div>
<div class="t" style="top:269.88px;font-size:11.9px;left:783.50px;width:120px;text-align:right;transform:scaleX(0.977);transform-origin:100% 0;">0.0045489007</div>
<div class="t" style="top:269.88px;font-size:11.9px;left:866.50px;width:120px;text-align:right;transform:scaleX(0.977);transform-origin:100% 0;">3.4940736948</div>
<div class="t" style="top:269.88px;font-size:11.9px;left:914.50px;width:120px;text-align:right;transform:scaleX(0.977);transform-origin:100% 0;">2636</div>
<div class="t" style="top:269.88px;font-size:11.9px;left:997.50px;width:120px;text-align:right;transform:scaleX(0.977);transform-origin:100% 0;">0.0013255211</div>
<div class="a" style="left:0;top:287px;width:110px;height:18px;background:#0078d7"></div>
<div class="a" style="left:9.5px;top:290.9px;width:8px;height:8px;border-radius:50%;background:#ee3048"></div>
<div class="t" style="top:288.81px;font-size:12.1px;left:15.40px;width:90px;text-align:right;transform:scaleX(0.977);transform-origin:100% 0;color:#fff;">40743</div>
<div class="t" style="top:288.74px;font-size:12.3px;left:114.30px;transform:scaleX(0.885);transform-origin:0 0;">Cluster_4</div>
<div class="t" style="top:288.74px;font-size:12.3px;left:172.30px;transform:scaleX(0.868);transform-origin:0 0;">PF4 2</div>
<div class="t" style="top:288.88px;font-size:11.9px;left:191.50px;width:120px;text-align:right;transform:scaleX(0.977);transform-origin:100% 0;">2638</div>
<div class="t" style="top:288.88px;font-size:11.9px;left:274.50px;width:120px;text-align:right;transform:scaleX(0.977);transform-origin:100% 0;">4.19956e-322</div>
<div class="t" style="top:288.88px;font-size:11.9px;left:357.50px;width:120px;text-align:right;transform:scaleX(0.977);transform-origin:100% 0;">701.55388949</div>
<div class="t" style="top:288.88px;font-size:11.9px;left:440.50px;width:120px;text-align:right;transform:scaleX(0.977);transform-origin:100% 0;">0</div>
<div class="a" style="left:569px;top:289px;width:85px;height:14px;background:#ee3048"></div>
<div class="t" style="top:288.88px;font-size:11.9px;left:530.50px;width:120px;text-align:right;transform:scaleX(0.977);transform-origin:100% 0;">697.26615173</div>
<div class="t" style="top:288.88px;font-size:11.9px;left:613.50px;width:120px;text-align:right;transform:scaleX(0.977);transform-origin:100% 0;">0.8398043487</div>
<div class="t" style="top:288.88px;font-size:11.9px;left:700.50px;width:120px;text-align:right;transform:scaleX(0.977);transform-origin:100% 0;">0.000051554</div>
<div class="t" style="top:288.88px;font-size:11.9px;left:783.50px;width:120px;text-align:right;transform:scaleX(0.977);transform-origin:100% 0;">0.0045489007</div>
<div class="t" style="top:288.88px;font-size:11.9px;left:866.50px;width:120px;text-align:right;transform:scaleX(0.977);transform-origin:100% 0;">3.5174607471</div>
<div class="t" style="top:288.88px;font-size:11.9px;left:914.50px;width:120px;text-align:right;transform:scaleX(0.977);transform-origin:100% 0;">2636</div>
<div class="t" style="top:288.88px;font-size:11.9px;left:997.50px;width:120px;text-align:right;transform:scaleX(0.977);transform-origin:100% 0;">0.0013343933</div>
<div class="a" style="left:0;top:306px;width:110px;height:18px;background:#0078d7"></div>
<div class="a" style="left:9.5px;top:309.9px;width:8px;height:8px;border-radius:50%;background:#ee3048"></div>
<div class="t" style="top:307.81px;font-size:12.1px;left:15.40px;width:90px;text-align:right;transform:scaleX(0.977);transform-origin:100% 0;color:#fff;">40744</div>
<div class="t" style="top:307.74px;font-size:12.3px;left:114.30px;transform:scaleX(0.885);transform-origin:0 0;">Cluster_4</div>
<div class="t" style="top:307.74px;font-size:12.3px;left:172.30px;transform:scaleX(0.868);transform-origin:0 0;">SPARC 2</div>
<div class="t" style="top:307.88px;font-size:11.9px;left:191.50px;width:120px;text-align:right;transform:scaleX(0.977);transform-origin:100% 0;">2638</div>
<div class="t" style="top:307.88px;font-size:11.9px;left:274.50px;width:120px;text-align:right;transform:scaleX(0.977);transform-origin:100% 0;">4.19956e-322</div>
<div class="t" style="top:307.88px;font-size:11.9px;left:357.50px;width:120px;text-align:right;transform:scaleX(0.977);transform-origin:100% 0;">609.09305539</div>
<div class="t" style="top:307.88px;font-size:11.9px;left:440.50px;width:120px;text-align:right;transform:scaleX(0.977);transform-origin:100% 0;">0</div>
<div class="a" style="left:569px;top:308px;width:85px;height:14px;background:#ee3048"></div>
<div class="t" style="top:307.88px;font-size:11.9px;left:530.50px;width:120px;text-align:right;transform:scaleX(0.977);transform-origin:100% 0;">604.86330957</div>
<div class="t" style="top:307.88px;font-size:11.9px;left:613.50px;width:120px;text-align:right;transform:scaleX(0.977);transform-origin:100% 0;">0.8085041251</div>
<div class="t" style="top:307.88px;font-size:11.9px;left:700.50px;width:120px;text-align:right;transform:scaleX(0.977);transform-origin:100% 0;">0.0000589188</div>
<div class="t" style="top:307.88px;font-size:11.9px;left:783.50px;width:120px;text-align:right;transform:scaleX(0.977);transform-origin:100% 0;">0.0045489007</div>
<div class="t" style="top:307.88px;font-size:11.9px;left:866.50px;width:120px;text-align:right;transform:scaleX(0.977);transform-origin:100% 0;">4.1339872771</div>
<div class="t" style="top:307.88px;font-size:11.9px;left:914.50px;width:120px;text-align:right;transform:scaleX(0.977);transform-origin:100% 0;">2636</div>
<div class="t" style="top:307.88px;font-size:11.9px;left:997.50px;width:120px;text-align:right;transform:scaleX(0.977);transform-origin:100% 0;">0.0015682805</div>
<div class="a" style="left:0;top:325px;width:110px;height:18px;background:#0078d7"></div>
<div class="a" style="left:9.5px;top:328.9px;width:8px;height:8px;border-radius:50%;background:#ee3048"></div>
<div class="t" style="top:326.81px;font-size:12.1px;left:15.40px;width:90px;text-align:right;transform:scaleX(0.977);transform-origin:100% 0;color:#fff;">40745</div>
<div class="t" style="top:326.74px;font-size:12.3px;left:114.30px;transform:scaleX(0.885);transform-origin:0 0;">Cluster_4</div>
<div class="t" style="top:326.74px;font-size:12.3px;left:172.30px;transform:scaleX(0.868);transform-origin:0 0;">PPBP 2</div>
<div class="t" style="top:326.88px;font-size:11.9px;left:191.50px;width:120px;text-align:right;transform:scaleX(0.977);transform-origin:100% 0;">2638</div>
<div class="t" style="top:326.88px;font-size:11.9px;left:274.50px;width:120px;text-align:right;transform:scaleX(0.977);transform-origin:100% 0;">4.19956e-322</div>
<div class="t" style="top:326.88px;font-size:11.9px;left:357.50px;width:120px;text-align:right;transform:scaleX(0.977);transform-origin:100% 0;">555.63017736</div>
<div class="t" style="top:326.88px;font-size:11.9px;left:440.50px;width:120px;text-align:right;transform:scaleX(0.977);transform-origin:100% 0;">0</div>
<div class="a" style="left:569px;top:327px;width:85px;height:14px;background:#ee3048"></div>
<div class="t" style="top:326.88px;font-size:11.9px;left:530.50px;width:120px;text-align:right;transform:scaleX(0.977);transform-origin:100% 0;">551.53873424</div>
<div class="t" style="top:326.88px;font-size:11.9px;left:613.50px;width:120px;text-align:right;transform:scaleX(0.977);transform-origin:100% 0;">0.7872852754</div>
<div class="t" style="top:326.88px;font-size:11.9px;left:700.50px;width:120px;text-align:right;transform:scaleX(0.977);transform-origin:100% 0;">0.0000810134</div>
<div class="t" style="top:326.88px;font-size:11.9px;left:783.50px;width:120px;text-align:right;transform:scaleX(0.977);transform-origin:100% 0;">0.0045489007</div>
<div class="t" style="top:326.88px;font-size:11.9px;left:866.50px;width:120px;text-align:right;transform:scaleX(0.977);transform-origin:100% 0;">4.538622096</div>
<div class="t" style="top:326.88px;font-size:11.9px;left:914.50px;width:120px;text-align:right;transform:scaleX(0.977);transform-origin:100% 0;">2636</div>
<div class="t" style="top:326.88px;font-size:11.9px;left:997.50px;width:120px;text-align:right;transform:scaleX(0.977);transform-origin:100% 0;">0.0017217838</div>
<div class="a" style="left:0;top:344px;width:110px;height:18px;background:#0078d7"></div>
<div class="a" style="left:9.5px;top:347.9px;width:8px;height:8px;border-radius:50%;background:#ee3048"></div>
<div class="t" style="top:345.81px;font-size:12.1px;left:15.40px;width:90px;text-align:right;transform:scaleX(0.977);transform-origin:100% 0;color:#fff;">40746</div>
<div class="t" style="top:345.74px;font-size:12.3px;left:114.30px;transform:scaleX(0.885);transform-origin:0 0;">Cluster_4</div>
<div class="t" style="top:345.74px;font-size:12.3px;left:172.30px;transform:scaleX(0.868);transform-origin:0 0;">PTCRA 2</div>
<div class="t" style="top:345.88px;font-size:11.9px;left:191.50px;width:120px;text-align:right;transform:scaleX(0.977);transform-origin:100% 0;">2638</div>
<div class="t" style="top:345.88px;font-size:11.9px;left:274.50px;width:120px;text-align:right;transform:scaleX(0.977);transform-origin:100% 0;">4.19956e-322</div>
<div class="t" style="top:345.88px;font-size:11.9px;left:357.50px;width:120px;text-align:right;transform:scaleX(0.977);transform-origin:100% 0;">551.27037942</div>
<div class="t" style="top:345.88px;font-size:11.9px;left:440.50px;width:120px;text-align:right;transform:scaleX(0.977);transform-origin:100% 0;">0</div>
<div class="a" style="left:569px;top:346px;width:85px;height:14px;background:#ee3048"></div>
<div class="t" style="top:345.88px;font-size:11.9px;left:530.50px;width:120px;text-align:right;transform:scaleX(0.977);transform-origin:100% 0;">547.21672486</div>
<div class="t" style="top:345.88px;font-size:11.9px;left:613.50px;width:120px;text-align:right;transform:scaleX(0.977);transform-origin:100% 0;">0.7854393025</div>
<div class="t" style="top:345.88px;font-size:11.9px;left:700.50px;width:120px;text-align:right;transform:scaleX(0.977);transform-origin:100% 0;">0.0000883783</div>
<div class="t" style="top:345.88px;font-size:11.9px;left:783.50px;width:120px;text-align:right;transform:scaleX(0.977);transform-origin:100% 0;">0.0045489007</div>
<div class="t" style="top:345.88px;font-size:11.9px;left:866.50px;width:120px;text-align:right;transform:scaleX(0.977);transform-origin:100% 0;">4.5733152535</div>
<div class="t" style="top:345.88px;font-size:11.9px;left:914.50px;width:120px;text-align:right;transform:scaleX(0.977);transform-origin:100% 0;">2636</div>
<div class="t" style="top:345.88px;font-size:11.9px;left:997.50px;width:120px;text-align:right;transform:scaleX(0.977);transform-origin:100% 0;">0.0017349451</div>
<div class="a" style="left:0;top:363px;width:110px;height:18px;background:#0078d7"></div>
<div class="a" style="left:9.5px;top:366.9px;width:8px;height:8px;border-radius:50%;background:#ee3048"></div>
<div class="t" style="top:364.81px;font-size:12.1px;left:15.40px;width:90px;text-align:right;transform:scaleX(0.977);transform-origin:100% 0;color:#fff;">40747</div>
<div class="t" style="top:364.74px;font-size:12.3px;left:114.30px;transform:scaleX(0.885);transform-origin:0 0;">Cluster_4</div>
<div class="t" style="top:364.74px;font-size:12.3px;left:172.30px;transform:scaleX(0.868);transform-origin:0 0;">CLU 2</div>
<div class="t" style="top:364.88px;font-size:11.9px;left:191.50px;width:120px;text-align:right;transform:scaleX(0.977);transform-origin:100% 0;">2638</div>
<div class="t" style="top:364.88px;font-size:11.9px;left:274.50px;width:120px;text-align:right;transform:scaleX(0.977);transform-origin:100% 0;">4.19956e-322</div>
<div class="t" style="top:364.88px;font-size:11.9px;left:357.50px;width:120px;text-align:right;transform:scaleX(0.977);transform-origin:100% 0;">507.01089438</div>
<div class="t" style="top:364.88px;font-size:11.9px;left:440.50px;width:120px;text-align:right;transform:scaleX(0.977);transform-origin:100% 0;">0</div>
<div class="a" style="left:569px;top:365px;width:85px;height:14px;background:#ee3048"></div>
<div class="t" style="top:364.88px;font-size:11.9px;left:530.50px;width:120px;text-align:right;transform:scaleX(0.977);transform-origin:100% 0;">502.99200193</div>
<div class="t" style="top:364.88px;font-size:11.9px;left:613.50px;width:120px;text-align:right;transform:scaleX(0.977);transform-origin:100% 0;">0.7656088731</div>
<div class="t" style="top:364.88px;font-size:11.9px;left:700.50px;width:120px;text-align:right;transform:scaleX(0.977);transform-origin:100% 0;">0.0000957431</div>
<div class="t" style="top:364.88px;font-size:11.9px;left:783.50px;width:120px;text-align:right;transform:scaleX(0.977);transform-origin:100% 0;">0.0045489007</div>
<div class="t" style="top:364.88px;font-size:11.9px;left:866.50px;width:120px;text-align:right;transform:scaleX(0.977);transform-origin:100% 0;">4.9408710221</div>
<div class="t" style="top:364.88px;font-size:11.9px;left:914.50px;width:120px;text-align:right;transform:scaleX(0.977);transform-origin:100% 0;">2636</div>
<div class="t" style="top:364.88px;font-size:11.9px;left:997.50px;width:120px;text-align:right;transform:scaleX(0.977);transform-origin:100% 0;">0.001874382</div>
<div class="a" style="left:0;top:382px;width:110px;height:18px;background:#0078d7"></div>
<div class="a" style="left:9.5px;top:385.9px;width:8px;height:8px;border-radius:50%;background:#ee3048"></div>
<div class="t" style="top:383.81px;font-size:12.1px;left:15.40px;width:90px;text-align:right;transform:scaleX(0.977);transform-origin:100% 0;color:#fff;">40748</div>
<div class="t" style="top:383.74px;font-size:12.3px;left:114.30px;transform:scaleX(0.885);transform-origin:0 0;">Cluster_4</div>
<div class="t" style="top:383.74px;font-size:12.3px;left:172.30px;transform:scaleX(0.868);transform-origin:0 0;">TMEM40 2</div>
<div class="t" style="top:383.88px;font-size:11.9px;left:191.50px;width:120px;text-align:right;transform:scaleX(0.977);transform-origin:100% 0;">2638</div>
<div class="t" style="top:383.88px;font-size:11.9px;left:274.50px;width:120px;text-align:right;transform:scaleX(0.977);transform-origin:100% 0;">4.19956e-322</div>
<div class="t" style="top:383.88px;font-size:11.9px;left:357.50px;width:120px;text-align:right;transform:scaleX(0.977);transform-origin:100% 0;">502.71604045</div>
<div class="t" style="top:383.88px;font-size:11.9px;left:440.50px;width:120px;text-align:right;transform:scaleX(0.977);transform-origin:100% 0;">0</div>
<div class="a" style="left:569px;top:384px;width:85px;height:14px;background:#ee3048"></div>
<div class="t" style="top:383.88px;font-size:11.9px;left:530.50px;width:120px;text-align:right;transform:scaleX(0.977);transform-origin:100% 0;">498.78732463</div>
<div class="t" style="top:383.88px;font-size:11.9px;left:613.50px;width:120px;text-align:right;transform:scaleX(0.977);transform-origin:100% 0;">0.7635730488</div>
<div class="t" style="top:383.88px;font-size:11.9px;left:700.50px;width:120px;text-align:right;transform:scaleX(0.977);transform-origin:100% 0;">0.0001178377</div>
<div class="t" style="top:383.88px;font-size:11.9px;left:783.50px;width:120px;text-align:right;transform:scaleX(0.977);transform-origin:100% 0;">0.0045489007</div>
<div class="t" style="top:383.88px;font-size:11.9px;left:866.50px;width:120px;text-align:right;transform:scaleX(0.977);transform-origin:100% 0;">4.9780729362</div>
<div class="t" style="top:383.88px;font-size:11.9px;left:914.50px;width:120px;text-align:right;transform:scaleX(0.977);transform-origin:100% 0;">2636</div>
<div class="t" style="top:383.88px;font-size:11.9px;left:997.50px;width:120px;text-align:right;transform:scaleX(0.977);transform-origin:100% 0;">0.001888495</div>
<div class="a" style="left:0;top:401px;width:110px;height:18px;background:#0078d7"></div>
<div class="a" style="left:9.5px;top:404.9px;width:8px;height:8px;border-radius:50%;background:#ee3048"></div>
<div class="t" style="top:402.81px;font-size:12.1px;left:15.40px;width:90px;text-align:right;transform:scaleX(0.977);transform-origin:100% 0;color:#fff;">40749</div>
<div class="t" style="top:402.74px;font-size:12.3px;left:114.30px;transform:scaleX(0.885);transform-origin:0 0;">Cluster_4</div>
<div class="t" style="top:402.74px;font-size:12.3px;left:172.30px;transform:scaleX(0.868);transform-origin:0 0;">TREML1 2</div>
<div class="t" style="top:402.88px;font-size:11.9px;left:191.50px;width:120px;text-align:right;transform:scaleX(0.977);transform-origin:100% 0;">2638</div>
<div class="t" style="top:402.88px;font-size:11.9px;left:274.50px;width:120px;text-align:right;transform:scaleX(0.977);transform-origin:100% 0;">4.19956e-322</div>
<div class="t" style="top:402.88px;font-size:11.9px;left:357.50px;width:120px;text-align:right;transform:scaleX(0.977);transform-origin:100% 0;">500.94787831</div>
<div class="t" style="top:402.88px;font-size:11.9px;left:440.50px;width:120px;text-align:right;transform:scaleX(0.977);transform-origin:100% 0;">0</div>
<div class="a" style="left:569px;top:403px;width:85px;height:14px;background:#ee3048"></div>
<div class="t" style="top:402.88px;font-size:11.9px;left:530.50px;width:120px;text-align:right;transform:scaleX(0.977);transform-origin:100% 0;">497.04549143</div>
<div class="t" style="top:402.88px;font-size:11.9px;left:613.50px;width:120px;text-align:right;transform:scaleX(0.977);transform-origin:100% 0;">0.7627288782</div>
<div class="t" style="top:402.88px;font-size:11.9px;left:700.50px;width:120px;text-align:right;transform:scaleX(0.977);transform-origin:100% 0;">0.0001252025</div>
<div class="t" style="top:402.88px;font-size:11.9px;left:783.50px;width:120px;text-align:right;transform:scaleX(0.977);transform-origin:100% 0;">0.0045489007</div>
<div class="t" style="top:402.88px;font-size:11.9px;left:866.50px;width:120px;text-align:right;transform:scaleX(0.977);transform-origin:100% 0;">4.993469951</div>
<div class="t" style="top:402.88px;font-size:11.9px;left:914.50px;width:120px;text-align:right;transform:scaleX(0.977);transform-origin:100% 0;">2636</div>
<div class="t" style="top:402.88px;font-size:11.9px;left:997.50px;width:120px;text-align:right;transform:scaleX(0.977);transform-origin:100% 0;">0.0018943361</div>
<div class="a" style="left:0;top:420px;width:110px;height:18px;background:#0078d7"></div>
<div class="a" style="left:9.5px;top:423.9px;width:8px;height:8px;border-radius:50%;background:#ee3048"></div>
<div class="t" style="top:421.81px;font-size:12.1px;left:15.40px;width:90px;text-align:right;transform:scaleX(0.977);transform-origin:100% 0;color:#fff;">40750</div>
<div class="t" style="top:421.74px;font-size:12.3px;left:114.30px;transform:scaleX(0.885);transform-origin:0 0;">Cluster_4</div>
<div class="t" style="top:421.74px;font-size:12.3px;left:172.30px;transform:scaleX(0.868);transform-origin:0 0;">TUBB1 2</div>
<div class="t" style="top:421.88px;font-size:11.9px;left:191.50px;width:120px;text-align:right;transform:scaleX(0.977);transform-origin:100% 0;">2638</div>
<div class="t" style="top:421.88px;font-size:11.9px;left:274.50px;width:120px;text-align:right;transform:scaleX(0.977);transform-origin:100% 0;">4.19956e-322</div>
<div class="t" style="top:421.88px;font-size:11.9px;left:357.50px;width:120px;text-align:right;transform:scaleX(0.977);transform-origin:100% 0;">499.47383349</div>
<div class="t" style="top:421.88px;font-size:11.9px;left:440.50px;width:120px;text-align:right;transform:scaleX(0.977);transform-origin:100% 0;">0</div>
<div class="a" style="left:569px;top:422px;width:85px;height:14px;background:#ee3048"></div>
<div class="t" style="top:421.88px;font-size:11.9px;left:530.50px;width:120px;text-align:right;transform:scaleX(0.977);transform-origin:100% 0;">495.59627019</div>
<div class="t" style="top:421.88px;font-size:11.9px;left:613.50px;width:120px;text-align:right;transform:scaleX(0.977);transform-origin:100% 0;">0.7620224154</div>
<div class="t" style="top:421.88px;font-size:11.9px;left:700.50px;width:120px;text-align:right;transform:scaleX(0.977);transform-origin:100% 0;">0.0001325674</div>
<div class="t" style="top:421.88px;font-size:11.9px;left:783.50px;width:120px;text-align:right;transform:scaleX(0.977);transform-origin:100% 0;">0.0045489007</div>
<div class="t" style="top:421.88px;font-size:11.9px;left:866.50px;width:120px;text-align:right;transform:scaleX(0.977);transform-origin:100% 0;">5.0063421914</div>
<div class="t" style="top:421.88px;font-size:11.9px;left:914.50px;width:120px;text-align:right;transform:scaleX(0.977);transform-origin:100% 0;">2636</div>
<div class="t" style="top:421.88px;font-size:11.9px;left:997.50px;width:120px;text-align:right;transform:scaleX(0.977);transform-origin:100% 0;">0.0018992193</div>
<div class="a" style="left:10.7px;top:444.1px;width:5.6px;height:5.6px;border-radius:50%;background:#ee3048"></div>
<div class="t" style="top:440.81px;font-size:12.1px;left:15.40px;width:90px;text-align:right;transform:scaleX(0.977);transform-origin:100% 0;">40751</div>
<div class="t" style="top:440.74px;font-size:12.3px;left:114.30px;transform:scaleX(0.885);transform-origin:0 0;">Cluster_4</div>
<div class="t" style="top:440.74px;font-size:12.3px;left:172.30px;transform:scaleX(0.868);transform-origin:0 0;">SEPT5 2</div>
<div class="t" style="top:440.88px;font-size:11.9px;left:191.50px;width:120px;text-align:right;transform:scaleX(0.977);transform-origin:100% 0;">2638</div>
<div class="t" style="top:440.88px;font-size:11.9px;left:274.50px;width:120px;text-align:right;transform:scaleX(0.977);transform-origin:100% 0;">4.19956e-322</div>
<div class="t" style="top:440.88px;font-size:11.9px;left:357.50px;width:120px;text-align:right;transform:scaleX(0.977);transform-origin:100% 0;">451.11708533</div>
<div class="t" style="top:440.88px;font-size:11.9px;left:440.50px;width:120px;text-align:right;transform:scaleX(0.977);transform-origin:100% 0;">0</div>
<div class="a" style="left:567px;top:439px;width:89px;height:18px;background:#ee3048"></div>
<div class="t" style="top:440.88px;font-size:11.9px;left:530.50px;width:120px;text-align:right;transform:scaleX(0.977);transform-origin:100% 0;">447.26300313</div>
<div class="t" style="top:440.88px;font-size:11.9px;left:613.50px;width:120px;text-align:right;transform:scaleX(0.977);transform-origin:100% 0;">0.7374001236</div>
<div class="t" style="top:440.88px;font-size:11.9px;left:700.50px;width:120px;text-align:right;transform:scaleX(0.977);transform-origin:100% 0;">0.0001399322</div>
<div class="t" style="top:440.88px;font-size:11.9px;left:783.50px;width:120px;text-align:right;transform:scaleX(0.977);transform-origin:100% 0;">0.0045489007</div>
<div class="t" style="top:440.88px;font-size:11.9px;left:866.50px;width:120px;text-align:right;transform:scaleX(0.977);transform-origin:100% 0;">5.4475247612</div>
<div class="t" style="top:440.88px;font-size:11.9px;left:914.50px;width:120px;text-align:right;transform:scaleX(0.977);transform-origin:100% 0;">2636</div>
<div class="t" style="top:440.88px;font-size:11.9px;left:997.50px;width:120px;text-align:right;transform:scaleX(0.977);transform-origin:100% 0;">0.0020665875</div>
<div class="hl" style="left:0;top:153px;width:1128px"></div><div class="hl" style="left:0;top:153px;width:110px;background:#cbcbcb"></div>
<div class="hl" style="left:0;top:172px;width:1128px"></div><div class="hl" style="left:0;top:172px;width:110px;background:#cbcbcb"></div>
<div class="hl" style="left:0;top:191px;width:1128px"></div><div class="hl" style="left:0;top:191px;width:110px;background:#cbcbcb"></div>
<div class="hl" style="left:0;top:210px;width:1128px"></div><div class="hl" style="left:0;top:210px;width:110px;background:#cbcbcb"></div>
<div class="hl" style="left:0;top:229px;width:1128px"></div><div class="hl" style="left:0;top:229px;width:110px;background:#cbcbcb"></div>
<div class="hl" style="left:0;top:248px;width:1128px"></div><div class="hl" style="left:0;top:248px;width:110px;background:#cbcbcb"></div>
<div class="hl" style="left:0;top:267px;width:1128px"></div><div class="hl" style="left:0;top:267px;width:110px;background:#cbcbcb"></div>
<div class="hl" style="left:0;top:286px;width:1128px"></div><div class="hl" style="left:0;top:286px;width:110px;background:#cbcbcb"></div>
<div class="hl" style="left:0;top:305px;width:1128px"></div><div class="hl" style="left:0;top:305px;width:110px;background:#cbcbcb"></div>
<div class="hl" style="left:0;top:324px;width:1128px"></div><div class="hl" style="left:0;top:324px;width:110px;background:#cbcbcb"></div>
<div class="hl" style="left:0;top:343px;width:1128px"></div><div class="hl" style="left:0;top:343px;width:110px;background:#cbcbcb"></div>
<div class="hl" style="left:0;top:362px;width:1128px"></div><div class="hl" style="left:0;top:362px;width:110px;background:#cbcbcb"></div>
<div class="hl" style="left:0;top:381px;width:1128px"></div><div class="hl" style="left:0;top:381px;width:110px;background:#cbcbcb"></div>
<div class="hl" style="left:0;top:400px;width:1128px"></div><div class="hl" style="left:0;top:400px;width:110px;background:#cbcbcb"></div>
<div class="hl" style="left:0;top:419px;width:1128px"></div><div class="hl" style="left:0;top:419px;width:110px;background:#cbcbcb"></div>
<div class="hl" style="left:0;top:438px;width:1128px"></div><div class="hl" style="left:0;top:438px;width:110px;background:#cbcbcb"></div>
<div class="vl" style="left:110px;top:0;height:134px"></div>
<div class="vl" style="left:110px;top:134px;height:320px;background:#d6d6e2"></div>
<div class="vl" style="left:168px;top:0;height:134px"></div>
<div class="vl" style="left:168px;top:134px;height:320px;background:#d6d6e2"></div>
<div class="vl" style="left:269px;top:0;height:134px"></div>
<div class="vl" style="left:269px;top:134px;height:320px;background:#d6d6e2"></div>
<div class="vl" style="left:317px;top:0;height:134px"></div>
<div class="vl" style="left:317px;top:134px;height:320px;background:#d6d6e2"></div>
<div class="vl" style="left:400px;top:0;height:134px"></div>
<div class="vl" style="left:400px;top:134px;height:320px;background:#d6d6e2"></div>
<div class="vl" style="left:483px;top:0;height:134px"></div>
<div class="vl" style="left:483px;top:134px;height:320px;background:#d6d6e2"></div>
<div class="vl" style="left:566px;top:0;height:134px"></div>
<div class="vl" style="left:566px;top:134px;height:320px;background:#d6d6e2"></div>
<div class="vl" style="left:656px;top:0;height:134px"></div>
<div class="vl" style="left:656px;top:134px;height:320px;background:#d6d6e2"></div>
<div class="vl" style="left:739px;top:0;height:134px"></div>
<div class="vl" style="left:739px;top:134px;height:320px;background:#d6d6e2"></div>
<div class="vl" style="left:826px;top:0;height:134px"></div>
<div class="vl" style="left:826px;top:134px;height:320px;background:#d6d6e2"></div>
<div class="vl" style="left:909px;top:0;height:134px"></div>
<div class="vl" style="left:909px;top:134px;height:320px;background:#d6d6e2"></div>
<div class="vl" style="left:992px;top:0;height:134px"></div>
<div class="vl" style="left:992px;top:134px;height:320px;background:#d6d6e2"></div>
<div class="vl" style="left:1040px;top:0;height:134px"></div>
<div class="vl" style="left:1040px;top:134px;height:320px;background:#d6d6e2"></div>
<div class="vl" style="left:1123px;top:0;height:134px"></div>
<div class="vl" style="left:1123px;top:134px;height:320px;background:#d6d6e2"></div>
<div class="a" style="left:1126.5px;top:199.5px;width:1.500px;height:2.500px;background:#f2ac5c"></div>
<div class="a" style="left:1126.5px;top:218.5px;width:1.500px;height:2.500px;background:#f2ac5c"></div>
<div class="a" style="left:1126.5px;top:237.5px;width:1.500px;height:2.500px;background:#f2ac5c"></div>
<div class="a" style="left:1126.5px;top:256.5px;width:1.500px;height:2.500px;background:#f2ac5c"></div>
<div class="a" style="left:1126.5px;top:275.5px;width:1.500px;height:2.500px;background:#f2ac5c"></div>
<div class="a" style="left:1126.5px;top:294.5px;width:1.500px;height:2.500px;background:#f2ac5c"></div>
<div class="a" style="left:1126.5px;top:313.5px;width:1.500px;height:2.500px;background:#b43424"></div>
<div class="a" style="left:1126.5px;top:332.5px;width:1.500px;height:2.500px;background:#b43424"></div>
<div class="a" style="left:1126.5px;top:351.5px;width:1.500px;height:2.500px;background:#b43424"></div>
<div class="a" style="left:1126.5px;top:370.5px;width:1.500px;height:2.500px;background:#f8c894"></div>
<div class="a" style="left:1126.5px;top:389.5px;width:1.500px;height:2.500px;background:#f8c894"></div>
<div class="a" style="left:1126.5px;top:408.5px;width:1.500px;height:2.500px;background:#f8c894"></div>
<div class="a" style="left:1126.5px;top:427.5px;width:1.500px;height:2.500px;background:#f8c894"></div>
<div class="a" style="left:1126.5px;top:446.5px;width:1.500px;height:2.500px;background:#f8c894"></div>
<div class="a" style="left:1128px;top:134px;width:18px;height:320px;background:#f0f0f0"></div>
<div class="a" style="left:1128px;top:234px;width:18px;height:8px;background:#cdcdcd"></div>
<svg class="a" style="left:1128px;top:134px" width="18" height="320" viewBox="0 0 18 320"><path d="M6 10.800l3.300-3.900 3.300 3.900" fill="none" stroke="#858585" stroke-width="1.300"/><path d="M6 309.500l3.300 3.900 3.300-3.900" fill="none" stroke="#858585" stroke-width="1.300"/></svg>
<div class="a" style="left:0px;top:454px;width:110px;height:18px;background:#f8f8f8"></div>
<div class="a" style="left:110px;top:454px;width:1036px;height:17px;background:#f0f0f0"></div>
<div class="a" style="left:127px;top:454px;width:699.5px;height:17px;background:#cdcdcd"></div>
<svg class="a" style="left:110px;top:454px" width="1036" height="17" viewBox="0 0 1036 17"><path d="M10.300 5.300l-3.900 3.300 3.900 3.300" fill="none" stroke="#858585" stroke-width="1.300"/><path d="M1007.700 5.300l3.900 3.300-3.900 3.300" fill="none" stroke="#858585" stroke-width="1.300"/></svg>
<div class="a" style="left:0;top:471px;width:1146px;height:1px;background:#f8f8f8"></div>
<svg class="a" style="left:90px;top:21px" width="290" height="185" viewBox="270 100 290 185"><path d="M365 111H522a18 18 0 0 1 18 18V178a18 18 0 0 1-18 18H431.500L280.500 271 384.500 196H365a18 18 0 0 1-18-18V129a18 18 0 0 1 18-18z" fill="#e6f50a" stroke="#5a28e0" stroke-width="3.800" stroke-linejoin="miter"/><text x="442.600" y="137.900" textLength="109.500" font-family="Liberation Sans, sans-serif" font-weight="bold" font-size="17.9" fill="#5a28e0" text-anchor="middle" lengthAdjust="spacingAndGlyphs">Rows 40738</text><text x="441.700" y="159.900" textLength="133" font-family="Liberation Sans, sans-serif" font-weight="bold" font-size="17.9" fill="#5a28e0" text-anchor="middle" lengthAdjust="spacingAndGlyphs">through 40750</text><text x="441.800" y="181.900" textLength="117" font-family="Liberation Sans, sans-serif" font-weight="bold" font-size="17.9" fill="#5a28e0" text-anchor="middle" lengthAdjust="spacingAndGlyphs">are selected.</text></svg>
</div>
<div class="a" style="left:0;top:551px;width:1326px;height:68px;background:#fcfcff"></div>
<div class="a" style="left:2px;top:551px;width:1321px;height:66px;border:1px solid #a6aed8"></div>
<div class="a" style="left:4px;top:553px;width:1317px;height:62px;background:#b4bcdc;border:1px solid #a0a0a6"></div>
<div class="a" style="left:0;top:618px;width:1326px;height:1px;background:#a2aad4"></div>
<div class="a" style="left:10px;top:559px;width:50px;height:50px;background:#f7f7f8;border:1px solid #7886c4"></div>
<svg class="a" style="left:11px;top:560px" width="48" height="48" viewBox="0 0 48 48"><rect x="1.500" y="1.200" width="7" height="1" fill="#d8d8dc"/><rect x="14" y="1.200" width="6" height="1" fill="#d8d8dc"/><rect x="1.500" y="4" width="6" height="0.700" fill="#e2e2e6"/><rect x="1.700" y="6.800" width="10" height="10.200" fill="#dfe7f3"/><rect x="1.700" y="10.300" width="10" height="1.100" fill="#1a8ae8"/><rect x="2" y="18.300" width="6" height="0.800" fill="#c8c8cc"/><rect x="13" y="3.500" width="12.500" height="12.500" fill="#fff"/><rect x="13.300" y="6" width="0.800" height="11" fill="#c4d0e4"/><rect x="14.400" y="6" width="2.500" height="11" fill="#eceff4"/><circle cx="15.700" cy="4.600" r="0.600" fill="#222"/><rect x="25" y="7" width="0.700" height="4" fill="#999"/><rect x="13.500" y="18" width="4" height="1" fill="#e4e4e6"/><rect x="20" y="17.800" width="7.500" height="2" fill="#ececee"/><rect x="13.500" y="21" width="3" height="0.800" fill="#e4e4e6"/><rect x="13.500" y="23.500" width="3" height="1.300" fill="#e0e0e4"/><rect x="20" y="23" width="7" height="1" fill="#e6e6ea"/><rect x="28" y="2.300" width="4" height="2" fill="#a4c6ee"/><rect x="33" y="2.300" width="4" height="2" fill="#b4d0f0"/><rect x="39" y="2.600" width="5" height="2" fill="#a4c6ee"/><rect x="45" y="2.300" width="3" height="2.400" fill="#8cb8ec"/><rect x="31" y="5.600" width="17" height="38.400" fill="#fff"/><rect x="30.300" y="5.600" width="0.500" height="38.400" fill="#dcdcdc"/><path d="M31 44.200C37.500 44 44 41.500 48 35.500" stroke="#f6a4b8" stroke-width="1.500" fill="none"/><rect x="29" y="45.800" width="6" height="0.700" fill="#d4d4d8"/><rect x="43" y="45" width="3" height="0.800" fill="#d4d4d8"/></svg>
<div class="a" style="left:0;top:619px;width:1326px;height:23px;background:#e3e7f2"></div>
<div class="t" style="top:623.04px;font-size:12.3px;left:7.40px;transform:scaleX(0.95);transform-origin:0 0;">evaluations done</div>
<div class="a" style="left:1219px;top:620px;width:1px;height:20px;background:#a8a8b0"></div>
<div class="a" style="left:1242px;top:620px;width:1px;height:20px;background:#a8a8b0"></div>
<svg class="a" style="left:1220px;top:619px" width="106" height="23" viewBox="0 0 106 23"><circle cx="10.5" cy="10" r="5.6" fill="#111"/><text x="10.5" y="13.4" font-family="Liberation Serif, serif" font-weight="bold" font-style="italic" font-size="9.5" fill="#fff" text-anchor="middle">i</text><path d="M28 10.5l6-5.5 6 5.5" fill="none" stroke="#2a8fd8" stroke-width="1.6"/><path d="M29.500 10v5h9v-5l-4.500-4z" fill="#e4f2fc" stroke="#6ab4e8" stroke-width="0.700"/><rect x="32.5" y="11" width="3" height="4" fill="#c88a20"/><rect x="52.5" y="4.500" width="13" height="12" fill="#fff" stroke="#555" stroke-width="1"/><path d="M72 7h8l-4 5z" fill="#111"/><g fill="#c2c8de"><rect x="102" y="19" width="1.5" height="1.500"/><rect x="99" y="19" width="1.5" height="1.500"/><rect x="96" y="19" width="1.5" height="1.500"/><rect x="102" y="16" width="1.5" height="1.500"/><rect x="99" y="16" width="1.5" height="1.500"/><rect x="102" y="13" width="1.5" height="1.500"/></g></svg>
<div class="a" style="left:0;top:641px;width:1326px;height:1px;background:#b9b9b9"></div>
<div class="a" style="left:1325px;top:0;width:1px;height:48px;background:#dcdcdc"></div>
<div class="a" style="left:1325px;top:48px;width:1px;height:503px;background:#b2b2b2"></div>
<div class="a" style="left:1324px;top:48px;width:1px;height:28px;background:#98a4d8"></div>
<div class="a" style="left:1325px;top:551px;width:1px;height:91px;background:#5c5c5c"></div>
<div class="a" style="left:1325px;top:11px;width:1px;height:9px;background:#d04848"></div><div class="a" style="left:1325px;top:33px;width:1px;height:9px;background:#d04848"></div>
<div class="a" style="left:139px;top:0;width:1187px;height:1px;background:#b2b2b2"></div>
<svg class="a" style="left:0;top:0" width="1326" height="642" viewBox="0 0 1326 642"><path d="M0 0H139V1H9A8 8 0 0 0 1 9V633A8 8 0 0 0 9 641V642H0Z" fill="#0c0c0c"/><path d="M1326 634A8 8 0 0 1 1318 642H1326Z" fill="#1c1c1c"/><path d="M1326 0V8A8 8 0 0 0 1318 1H1300V0Z" fill="#c4c4c4"/></svg>
</body></html>
